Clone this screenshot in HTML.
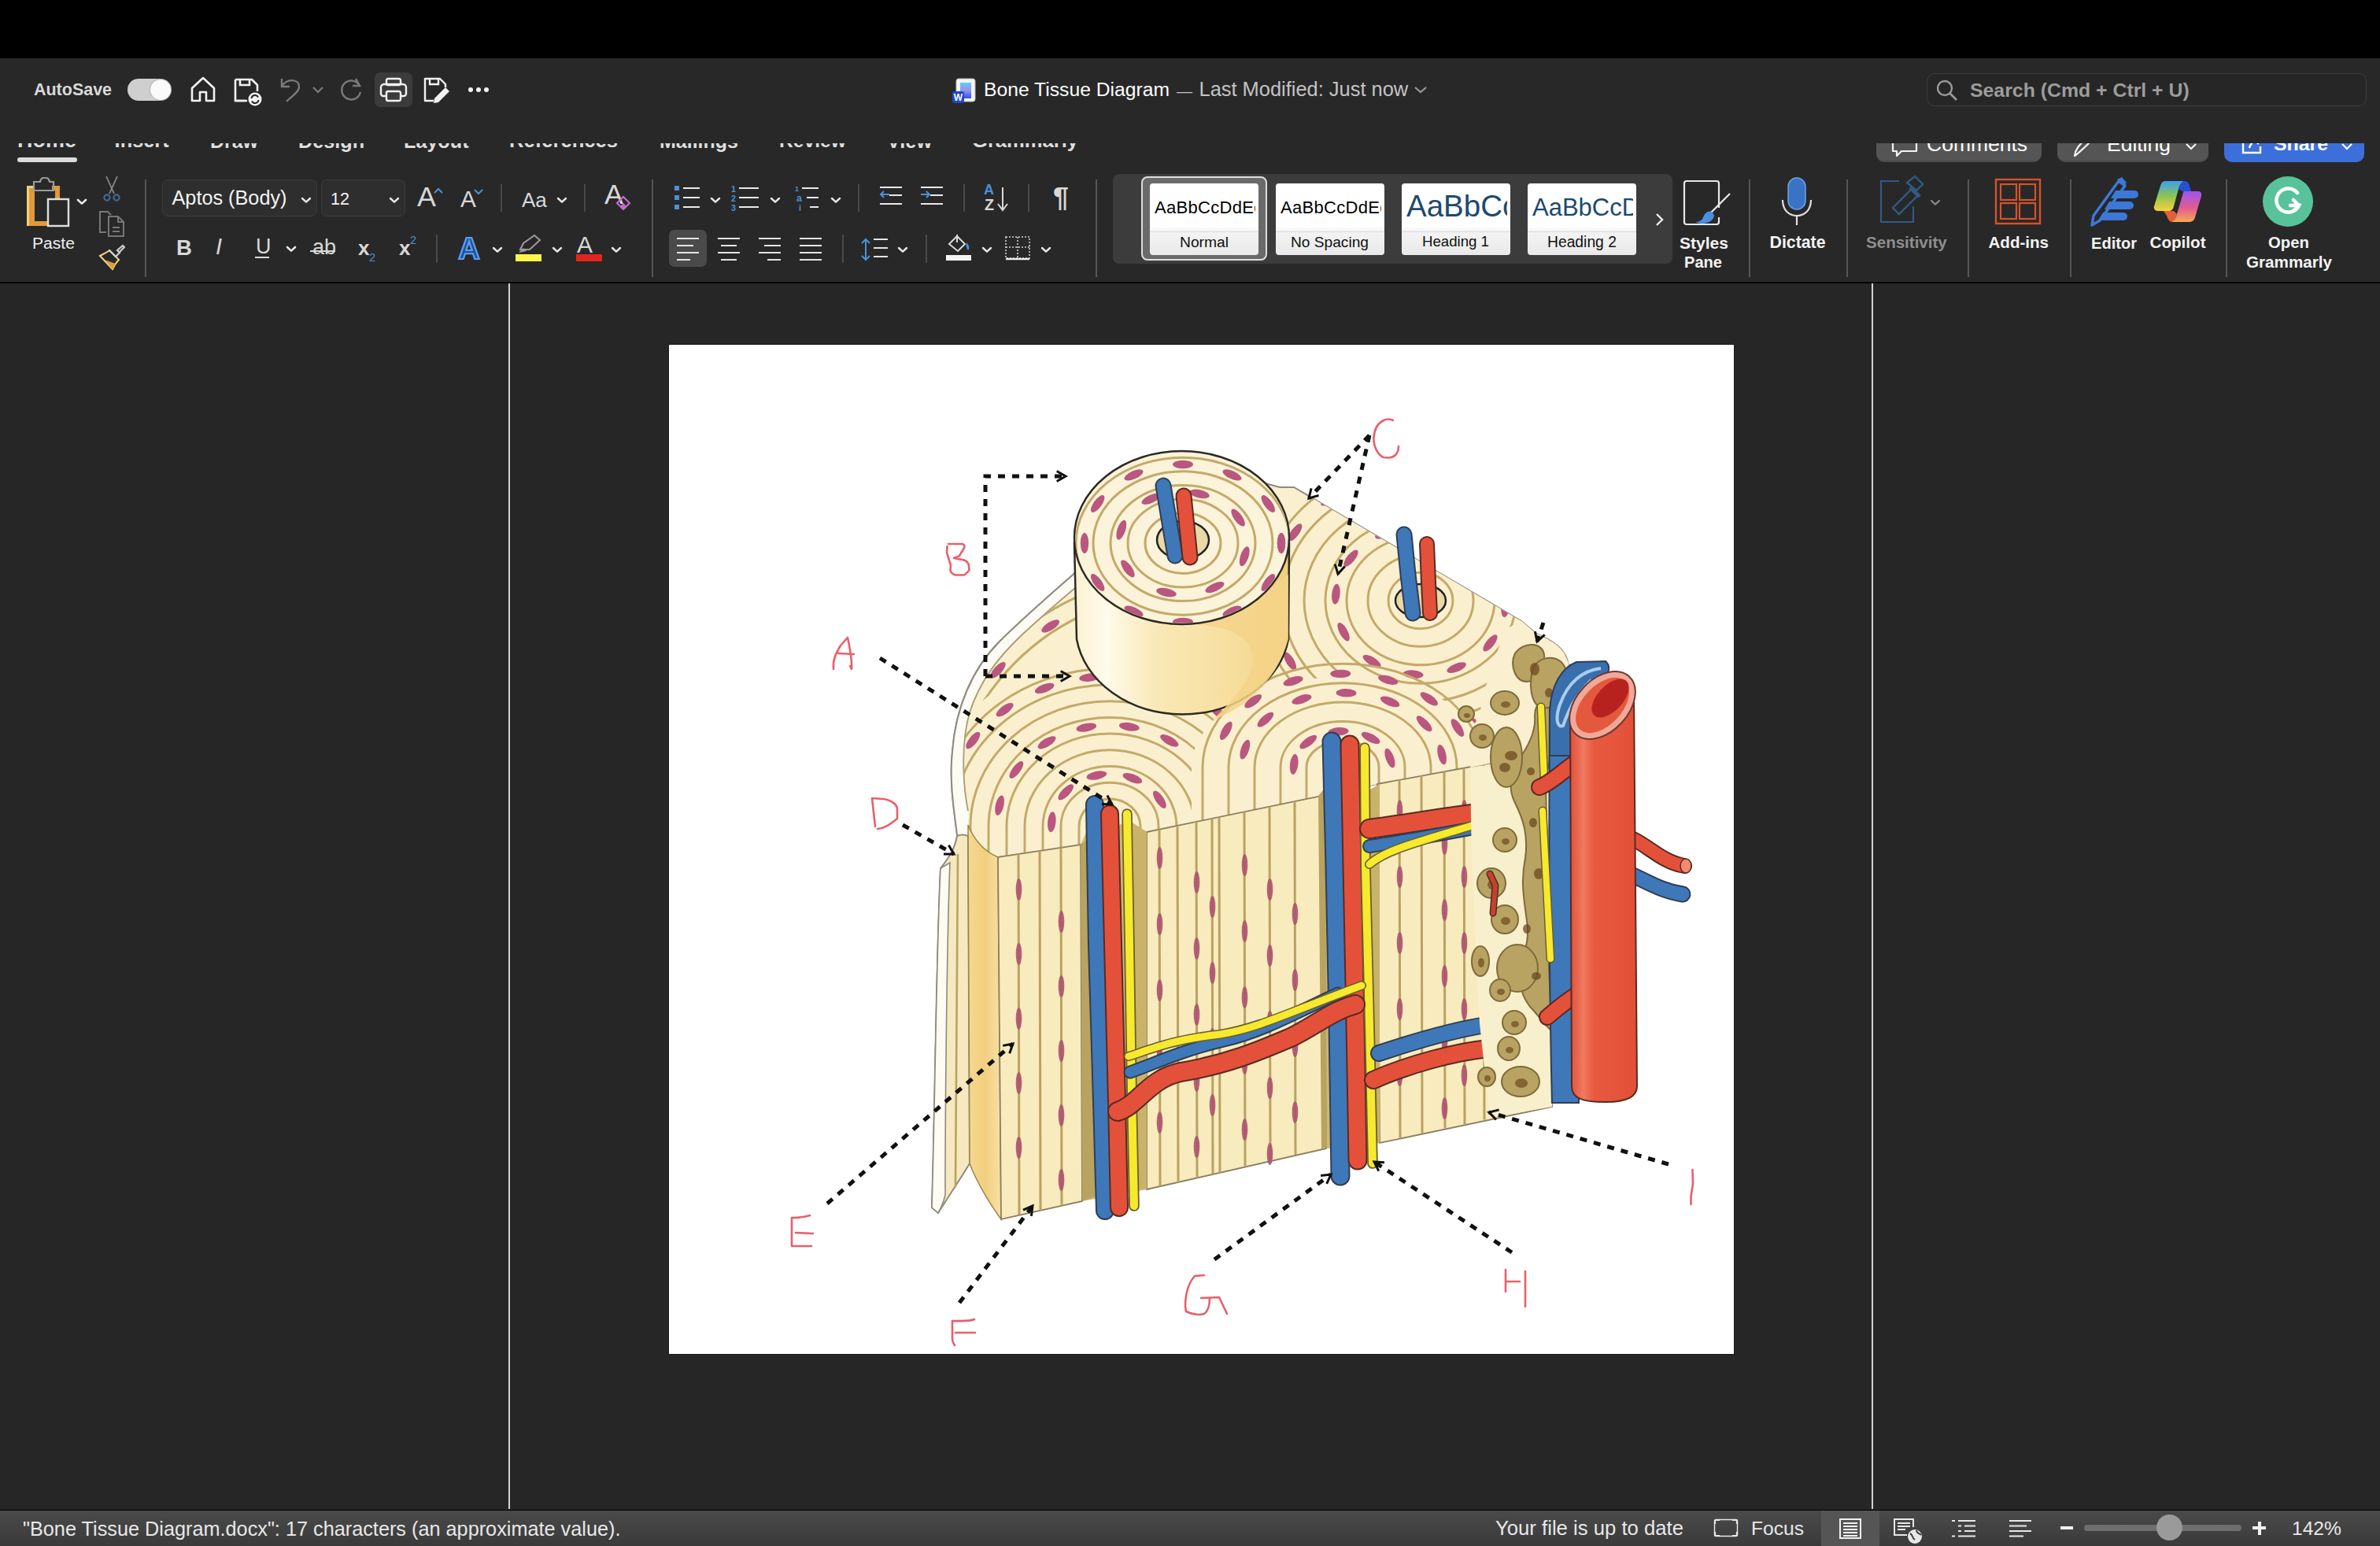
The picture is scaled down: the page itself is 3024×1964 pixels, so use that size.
<!DOCTYPE html>
<html><head><meta charset="utf-8"><title>Bone Tissue Diagram</title>
<style>*{margin:0;padding:0;box-sizing:border-box}
html,body{width:3024px;height:1964px;overflow:hidden;background:#262626;font-family:"Liberation Sans",sans-serif;color:#e6e6e6}
.abs{position:absolute}
.t{position:absolute;white-space:nowrap}
</style></head><body>
<div class="abs" style="left:0;top:0;width:3024px;height:74px;background:#000"></div>
<div class="abs" style="left:0;top:74px;width:3024px;height:283px;background:#282828"></div>
<div class="abs" style="left:0;top:357px;width:3024px;height:1px;background:#2f2f2f"></div>
<div class="abs" style="left:0;top:358px;width:3024px;height:2px;background:#000"></div>
<div class="abs" style="left:646px;top:360px;width:2px;height:1557px;background:#d4d4d4"></div>
<div class="abs" style="left:2378px;top:360px;width:2px;height:1557px;background:#d4d4d4"></div>
<div class="t" style="left:43.0px;top:103.7px;font-size:21.48px;line-height:21.48px;font-weight:700;color:#d9d9d9;">AutoSave</div>
<div class="abs" style="left:162px;top:100px;width:56px;height:28px;border-radius:14px;background:#cfcfcf"></div>
<div class="abs" style="left:191px;top:101px;width:26px;height:26px;border-radius:13px;background:#fafafa;box-shadow:0 0 2px rgba(0,0,0,.4)"></div>
<svg class="abs" style="left:240px;top:95px" width="36" height="36" viewBox="0 0 36 36"><path d="M4 17 L18 4 L32 17 V33 H22 V22 H14 V33 H4 Z" fill="none" stroke="#f2f2f2" stroke-width="2.6" stroke-linejoin="round"/></svg>
<svg class="abs" style="left:296px;top:98px" width="38" height="38" viewBox="0 0 38 38"><path d="M3 3 H24 L31 10 V18 M17 30 H3 Z" fill="none" stroke="#f2f2f2" stroke-width="2.6" stroke-linejoin="round"/><path d="M3 3 V30 H16" fill="none" stroke="#f2f2f2" stroke-width="2.6"/><path d="M9 3 V10 H21 V3" fill="none" stroke="#f2f2f2" stroke-width="2.6"/><circle cx="28" cy="28" r="8.5" fill="#f2f2f2"/><path d="M23.5 27 a4.5 4.5 0 0 1 8.5 -1.5 M32.5 29 a4.5 4.5 0 0 1 -8.5 1.5" fill="none" stroke="#282828" stroke-width="2"/></svg>
<svg class="abs" style="left:352px;top:96px" width="32" height="36" viewBox="0 0 32 36"><path d="M6 4 V14 H16" fill="none" stroke="#7a7a7a" stroke-width="2.4"/><path d="M6 14 C12 3 28 4 28 14 C28 22 16 28 12 33" fill="none" stroke="#7a7a7a" stroke-width="2.4"/></svg>
<svg class="abs" style="left:396px;top:108px" width="16" height="12" viewBox="0 0 16 12"><path d="M2 3 L8 9 L14 3" fill="none" stroke="#7a7a7a" stroke-width="2.2"/></svg>
<svg class="abs" style="left:430px;top:97px" width="33" height="33" viewBox="0 0 33 33"><path d="M27 12 A12 12 0 1 0 28 20" fill="none" stroke="#7a7a7a" stroke-width="2.4"/><path d="M22 3 L27 12 L18 12" fill="none" stroke="#7a7a7a" stroke-width="2.4"/></svg>
<div class="abs" style="left:476px;top:92px;width:48px;height:44px;border-radius:7px;background:#3b3b3b"></div>
<svg class="abs" style="left:482px;top:98px" width="36" height="33" viewBox="0 0 36 33"><rect x="9" y="2" width="18" height="8" rx="2" fill="none" stroke="#f2f2f2" stroke-width="2.4"/><path d="M8 24 H5 a3 3 0 0 1 -3 -3 V13 a4 4 0 0 1 4 -4 H30 a4 4 0 0 1 4 4 V21 a3 3 0 0 1 -3 3 H28" fill="none" stroke="#f2f2f2" stroke-width="2.4"/><rect x="9" y="18" width="18" height="12" rx="2" fill="none" stroke="#f2f2f2" stroke-width="2.4"/></svg>
<svg class="abs" style="left:537px;top:97px" width="36" height="36" viewBox="0 0 36 36"><path d="M14 31 H3 V3 H22 L29 10 V14" fill="none" stroke="#f2f2f2" stroke-width="2.4" stroke-linejoin="round"/><path d="M9 3 V10 H20 V3" fill="none" stroke="#f2f2f2" stroke-width="2.4"/><path d="M29 14 L34 19 L20 33 L14 34 L15 28 Z" fill="#f2f2f2"/></svg>
<div class="abs" style="left:595px;top:111px;width:6px;height:6px;border-radius:3px;background:#f2f2f2"></div>
<div class="abs" style="left:605px;top:111px;width:6px;height:6px;border-radius:3px;background:#f2f2f2"></div>
<div class="abs" style="left:615px;top:111px;width:6px;height:6px;border-radius:3px;background:#f2f2f2"></div>
<svg class="abs" style="left:1210px;top:99px" width="32" height="33" viewBox="0 0 32 33"><defs><linearGradient id="wg" x1="0" y1="0" x2="0" y2="1"><stop offset="0" stop-color="#5fd0f5"/><stop offset=".5" stop-color="#9a8ff0"/><stop offset="1" stop-color="#2a55e0"/></linearGradient></defs><rect x="5" y="1" width="24" height="29" rx="3" fill="#f4f4f4" stroke="#bbb"/><rect x="10" y="6" width="14" height="20" fill="url(#wg)"/><rect x="0" y="17" width="15" height="15" rx="3" fill="#2046c8"/><text x="7.5" y="29" font-family="Liberation Sans" font-weight="700" font-size="12" fill="#fff" text-anchor="middle">W</text></svg>
<div class="t" style="left:1250.0px;top:102.0px;font-size:24.69px;line-height:24.69px;font-weight:400;color:#ffffff;">Bone Tissue Diagram</div>
<div class="t" style="left:1495.0px;top:106.0px;font-size:20.00px;line-height:20.00px;font-weight:400;color:#c4c4c4;">—</div>
<div class="t" style="left:1523.5px;top:101.4px;font-size:25.43px;line-height:25.43px;font-weight:400;color:#c4c4c4;">Last Modified: Just now</div>
<svg class="abs" style="left:1796px;top:108px" width="18" height="12" viewBox="0 0 18 12"><path d="M2 3 L9 9 L16 3" fill="none" stroke="#9a9a9a" stroke-width="2.2"/></svg>
<div class="abs" style="left:2448px;top:93px;width:559px;height:42px;border-radius:10px;border:1.5px solid #3d3d3d;background:#262626"></div>
<svg class="abs" style="left:2459px;top:100px" width="30" height="30" viewBox="0 0 30 30"><circle cx="12" cy="12" r="9" fill="none" stroke="#9a9a9a" stroke-width="2.4"/><path d="M18.5 18.5 L27 27" stroke="#9a9a9a" stroke-width="2.6"/></svg>
<div class="t" style="left:2503.0px;top:102.9px;font-size:24.84px;line-height:24.84px;font-weight:700;color:#9c9c9c;">Search (Cmd + Ctrl + U)</div>
<div class="abs" style="left:0;top:182px;width:3024px;height:30px;overflow:hidden">
<div class="t" style="left:22.0px;top:-16.9px;font-size:26.98px;line-height:26.98px;font-weight:700;color:#dedede;">Home</div>
<div class="t" style="left:145.6px;top:-15.6px;font-size:25.37px;line-height:25.37px;font-weight:700;color:#dedede;">Insert</div>
<div class="t" style="left:267.0px;top:-15.2px;font-size:24.90px;line-height:24.90px;font-weight:700;color:#dedede;">Draw</div>
<div class="t" style="left:379.0px;top:-15.4px;font-size:25.23px;line-height:25.23px;font-weight:700;color:#dedede;">Design</div>
<div class="t" style="left:513.0px;top:-15.4px;font-size:25.18px;line-height:25.18px;font-weight:700;color:#dedede;">Layout</div>
<div class="t" style="left:647.0px;top:-15.8px;font-size:25.60px;line-height:25.60px;font-weight:700;color:#dedede;">References</div>
<div class="t" style="left:838.0px;top:-15.2px;font-size:25.00px;line-height:25.00px;font-weight:700;color:#dedede;">Mailings</div>
<div class="t" style="left:990.0px;top:-14.9px;font-size:24.64px;line-height:24.64px;font-weight:700;color:#dedede;">Review</div>
<div class="t" style="left:1127.0px;top:-15.4px;font-size:25.22px;line-height:25.22px;font-weight:700;color:#dedede;">View</div>
<div class="t" style="left:1235.0px;top:-15.7px;font-size:25.57px;line-height:25.57px;font-weight:700;color:#dedede;">Grammarly</div>
<div class="abs" style="left:2384px;top:-20px;width:210px;height:44px;border-radius:10px;background:#555;border-bottom:2px solid #4b4b4b"></div>
<svg class="abs" style="left:2402px;top:-14px" width="36" height="34" viewBox="0 0 36 34"><path d="M3 4 H33 V24 H14 L8 30 V24 H3 Z" fill="none" stroke="#f4f4f4" stroke-width="2.2" stroke-linejoin="round"/></svg>
<div class="t" style="left:2448.0px;top:-12.5px;font-size:26.50px;line-height:26.50px;font-weight:400;color:#ffffff;">Comments</div>
<div class="abs" style="left:2614px;top:-20px;width:192px;height:44px;border-radius:10px;background:#555;border-bottom:2px solid #4b4b4b"></div>
<svg class="abs" style="left:2632px;top:-14px" width="30" height="34" viewBox="0 0 30 34"><path d="M4 30 C5 22 8 18 22 4 L27 9 C13 23 10 26 4 30 Z" fill="none" stroke="#f4f4f4" stroke-width="2.2" stroke-linejoin="round"/></svg>
<div class="t" style="left:2677.0px;top:-12.5px;font-size:26.47px;line-height:26.47px;font-weight:400;color:#ffffff;">Editing</div>
<svg class="abs" style="left:2776px;top:-1px" width="16" height="12" viewBox="0 0 16 12"><path d="M2 2 L8 8 L14 2" fill="none" stroke="#f4f4f4" stroke-width="2.2"/></svg>
<div class="abs" style="left:2826px;top:-20px;width:178px;height:44px;border-radius:10px;background:#3d6fdb"></div>
<svg class="abs" style="left:2846px;top:-14px" width="32" height="30" viewBox="0 0 32 30"><path d="M14 4 H4 V26 H26 V18" fill="none" stroke="#fff" stroke-width="2.4"/><path d="M12 20 C14 12 20 9 28 9 M22 3 L28 9 L22 15" fill="none" stroke="#fff" stroke-width="2.4"/></svg>
<div class="t" style="left:2889.0px;top:-11.1px;font-size:24.82px;line-height:24.82px;font-weight:700;color:#ffffff;">Share</div>
<svg class="abs" style="left:2974px;top:-1px" width="16" height="12" viewBox="0 0 16 12"><path d="M2 2 L8 8 L14 2" fill="none" stroke="#fff" stroke-width="2.2"/></svg>
</div>
<div class="abs" style="left:22px;top:200px;width:76px;height:6px;border-radius:3px;background:#dcdcdc"></div>
<svg class="abs" style="left:30px;top:225px" width="62" height="66" viewBox="0 0 62 66"><path d="M7 14 H14 V56 H32 V62 H4 V14 Z" fill="#e09a3a"/><path d="M4 11 H14 V14 H7 V62 H4 Z" fill="#f3cf7e"/><path d="M36 11 H46 V28 H40 V17 H36 Z" fill="#e09a3a"/><path d="M13 6 H21 C22 -1 32 -1 33 6 H38 V17 H13 Z" fill="none" stroke="#9a9a9a" stroke-width="2.2"/><rect x="31" y="28" width="26" height="34" fill="none" stroke="#e0e0e0" stroke-width="2.4"/></svg>
<svg class="abs" style="left:96px;top:251px" width="16" height="11" viewBox="-2 -2 16 11"><path d="M1 1 L6.0 5.6 L11 1" fill="none" stroke="#e9e9e9" stroke-width="2.6" stroke-linecap="round" stroke-linejoin="round"/></svg>
<div class="t" style="left:41.0px;top:298.1px;font-size:21.09px;line-height:21.09px;font-weight:400;color:#f0f0f0;">Paste</div>
<svg class="abs" style="left:130px;top:222px" width="24" height="36" viewBox="0 0 24 36"><path d="M5 2 L15 24 M19 2 L9 24" stroke="#8a8a8a" stroke-width="1.8" fill="none"/><circle cx="6" cy="29" r="3.6" fill="none" stroke="#3f6a94" stroke-width="2.2"/><circle cx="18" cy="29" r="3.6" fill="none" stroke="#3f6a94" stroke-width="2.2"/></svg>
<svg class="abs" style="left:125px;top:267px" width="34" height="35" viewBox="0 0 34 35"><path d="M10 28 H2 V2 H12 L16 6" fill="none" stroke="#777" stroke-width="2"/><path d="M13 8 H25 L32 15 V33 H13 Z M25 8 V15 H32" fill="none" stroke="#777" stroke-width="2"/><path d="M18 22 H27 M18 27 H27" stroke="#777" stroke-width="2"/></svg>
<svg class="abs" style="left:125px;top:310px" width="34" height="34" viewBox="0 0 34 34"><path d="M2 15 C8 12 12 10 14 8 L26 20 C22 24 20 28 18 32 Z" fill="none" stroke="#f0d58f" stroke-width="2"/><path d="M8 20 L22 25 L18 32 Z" fill="#e09a3a"/><path d="M14 8 L22 16 L27 11 L24 8 L31 2 L33 4 L27 10" fill="none" stroke="#d0d0d0" stroke-width="2.2"/></svg>
<div class="abs" style="left:184.0px;top:228px;width:2px;height:124px;background:#555"></div>
<div class="abs" style="left:206px;top:228px;width:197px;height:47px;border-radius:7px;background:#2e2e2e;border:1px solid #3c3c3c"></div>
<div class="t" style="left:218.5px;top:239.0px;font-size:25.26px;line-height:25.26px;font-weight:400;color:#f4f4f4;">Aptos (Body)</div>
<svg class="abs" style="left:381px;top:249px" width="16" height="11" viewBox="-2 -2 16 11"><path d="M1 1 L6.0 5.6 L11 1" fill="none" stroke="#e9e9e9" stroke-width="2.4" stroke-linecap="round" stroke-linejoin="round"/></svg>
<div class="abs" style="left:408px;top:228px;width:107px;height:47px;border-radius:7px;background:#2e2e2e;border:1px solid #3c3c3c"></div>
<div class="t" style="left:420.0px;top:242.1px;font-size:21.62px;line-height:21.62px;font-weight:400;color:#f4f4f4;">12</div>
<svg class="abs" style="left:493px;top:249px" width="16" height="11" viewBox="-2 -2 16 11"><path d="M1 1 L6.0 5.6 L11 1" fill="none" stroke="#e9e9e9" stroke-width="2.4" stroke-linecap="round" stroke-linejoin="round"/></svg>
<div class="t" style="left:530.0px;top:232.6px;font-size:35.82px;line-height:35.82px;font-weight:400;color:#d8d8d8;">A</div>
<svg class="abs" style="left:551px;top:238px" width="12" height="8" viewBox="0 0 12 8"><path d="M1 7 L6 2 L11 7" fill="none" stroke="#4a90d9" stroke-width="2"/></svg>
<div class="t" style="left:585.0px;top:237.6px;font-size:29.85px;line-height:29.85px;font-weight:400;color:#d8d8d8;">A</div>
<svg class="abs" style="left:602px;top:240px" width="12" height="8" viewBox="0 0 12 8"><path d="M1 1 L6 6 L11 1" fill="none" stroke="#4a90d9" stroke-width="2"/></svg>
<div class="abs" style="left:636.0px;top:234px;width:2px;height:35px;background:#4a4a4a"></div>
<div class="t" style="left:663.0px;top:240.9px;font-size:26.02px;line-height:26.02px;font-weight:400;color:#d8d8d8;">Aa</div>
<svg class="abs" style="left:706px;top:249px" width="16" height="11" viewBox="-2 -2 16 11"><path d="M1 1 L6.0 5.6 L11 1" fill="none" stroke="#e9e9e9" stroke-width="2.4" stroke-linecap="round" stroke-linejoin="round"/></svg>
<div class="abs" style="left:742.0px;top:234px;width:2px;height:35px;background:#4a4a4a"></div>
<div class="t" style="left:768.0px;top:229.6px;font-size:35.82px;line-height:35.82px;font-weight:400;color:#d8d8d8;">A</div>
<svg class="abs" style="left:781px;top:245px" width="22" height="22" viewBox="0 0 22 22"><path d="M3 13 L11 5 L19 13 L11 21 Z" fill="none" stroke="#c06ad0" stroke-width="2.2"/><path d="M7 17 L11 13 L15 17 L11 21 Z" fill="#c06ad0"/></svg>
<div class="abs" style="left:828.0px;top:228px;width:2px;height:124px;background:#555"></div>
<div class="abs" style="left:857px;top:236px;width:6px;height:6px;background:#4a90d9"></div>
<div class="abs" style="left:857px;top:248px;width:6px;height:6px;background:#4a90d9"></div>
<div class="abs" style="left:857px;top:260px;width:6px;height:6px;background:#4a90d9"></div>
<div class="abs" style="left:868px;top:238.0px;width:21px;height:2px;background:#e9e9e9"></div><div class="abs" style="left:868px;top:250.0px;width:21px;height:2px;background:#e9e9e9"></div><div class="abs" style="left:868px;top:262.0px;width:21px;height:2px;background:#e9e9e9"></div>
<svg class="abs" style="left:901px;top:249px" width="16" height="11" viewBox="-2 -2 16 11"><path d="M1 1 L6.0 5.6 L11 1" fill="none" stroke="#e9e9e9" stroke-width="2.4" stroke-linecap="round" stroke-linejoin="round"/></svg>
<div class="t" style="left:929.0px;top:234.9px;font-size:10.71px;line-height:10.71px;font-weight:700;color:#4a90d9;">1</div>
<div class="t" style="left:929.0px;top:246.9px;font-size:10.71px;line-height:10.71px;font-weight:700;color:#4a90d9;">2</div>
<div class="t" style="left:929.0px;top:258.9px;font-size:10.71px;line-height:10.71px;font-weight:700;color:#4a90d9;">3</div>
<div class="abs" style="left:939px;top:238.0px;width:25px;height:2px;background:#e9e9e9"></div><div class="abs" style="left:939px;top:250.0px;width:25px;height:2px;background:#e9e9e9"></div><div class="abs" style="left:939px;top:262.0px;width:25px;height:2px;background:#e9e9e9"></div>
<svg class="abs" style="left:977px;top:249px" width="16" height="11" viewBox="-2 -2 16 11"><path d="M1 1 L6.0 5.6 L11 1" fill="none" stroke="#e9e9e9" stroke-width="2.4" stroke-linecap="round" stroke-linejoin="round"/></svg>
<div class="t" style="left:1010.0px;top:236.4px;font-size:8.93px;line-height:8.93px;font-weight:700;color:#4a90d9;">1</div>
<div class="t" style="left:1012.0px;top:245.6px;font-size:12.28px;line-height:12.28px;font-weight:700;color:#4a90d9;">a</div>
<div class="t" style="left:1015.0px;top:258.9px;font-size:10.71px;line-height:10.71px;font-weight:700;color:#4a90d9;">i</div>
<div class="abs" style="left:1019px;top:238.0px;width:21px;height:2px;background:#e9e9e9"></div>
<div class="abs" style="left:1025px;top:250.0px;width:15px;height:2px;background:#e9e9e9"></div>
<div class="abs" style="left:1029px;top:262.0px;width:11px;height:2px;background:#e9e9e9"></div>
<svg class="abs" style="left:1054px;top:249px" width="16" height="11" viewBox="-2 -2 16 11"><path d="M1 1 L6.0 5.6 L11 1" fill="none" stroke="#e9e9e9" stroke-width="2.4" stroke-linecap="round" stroke-linejoin="round"/></svg>
<div class="abs" style="left:1090.0px;top:234px;width:2px;height:35px;background:#4a4a4a"></div>
<div class="abs" style="left:1118px;top:237.0px;width:28px;height:2px;background:#e9e9e9"></div>
<div class="abs" style="left:1130px;top:247.0px;width:16px;height:2px;background:#e9e9e9"></div>
<div class="abs" style="left:1118px;top:258.0px;width:28px;height:2px;background:#e9e9e9"></div>
<svg class="abs" style="left:1117px;top:241px" width="14" height="12" viewBox="0 0 14 12"><path d="M13 6 H2 M6 2 L2 6 L6 10" fill="none" stroke="#4a90d9" stroke-width="2"/></svg>
<div class="abs" style="left:1170px;top:237.0px;width:28px;height:2px;background:#e9e9e9"></div>
<div class="abs" style="left:1182px;top:247.0px;width:16px;height:2px;background:#e9e9e9"></div>
<div class="abs" style="left:1170px;top:258.0px;width:28px;height:2px;background:#e9e9e9"></div>
<svg class="abs" style="left:1169px;top:241px" width="14" height="12" viewBox="0 0 14 12"><path d="M1 6 H12 M8 2 L12 6 L8 10" fill="none" stroke="#4a90d9" stroke-width="2"/></svg>
<div class="abs" style="left:1224.0px;top:234px;width:2px;height:35px;background:#4a4a4a"></div>
<div class="t" style="left:1250.0px;top:231.7px;font-size:18.06px;line-height:18.06px;font-weight:700;color:#4a90d9;">A</div>
<div class="t" style="left:1251.0px;top:251.3px;font-size:19.67px;line-height:19.67px;font-weight:700;color:#d8d8d8;">Z</div>
<svg class="abs" style="left:1266px;top:236px" width="18" height="34" viewBox="0 0 18 34"><path d="M8 2 V30 M2 23 L8 31 L14 23" fill="none" stroke="#d8d8d8" stroke-width="2"/></svg>
<div class="abs" style="left:1306.0px;top:234px;width:2px;height:35px;background:#4a4a4a"></div>
<div class="t" style="left:1338.0px;top:232.6px;font-size:35.71px;line-height:35.71px;font-weight:700;color:#d8d8d8;">¶</div>
<div class="abs" style="left:1392.0px;top:228px;width:2px;height:124px;background:#555"></div>
<div class="t" style="left:224.0px;top:300.6px;font-size:27.50px;line-height:27.50px;font-weight:700;color:#d8d8d8;">B</div>
<div class="t" style="left:274.0px;top:299.4px;font-size:29.00px;line-height:29.00px;font-weight:400;color:#d8d8d8;font-style:italic;font-family:"Liberation Serif",serif">I</div>
<div class="t" style="left:325.0px;top:300.1px;font-size:27.00px;line-height:27.00px;font-weight:400;color:#d8d8d8;">U</div>
<div class="abs" style="left:324px;top:326px;width:18px;height:2px;background:#d8d8d8"></div>
<svg class="abs" style="left:362px;top:311px" width="16" height="11" viewBox="-2 -2 16 11"><path d="M1 1 L6.0 5.6 L11 1" fill="none" stroke="#e9e9e9" stroke-width="2.6" stroke-linecap="round" stroke-linejoin="round"/></svg>
<div class="t" style="left:397.0px;top:301.1px;font-size:27.00px;line-height:27.00px;font-weight:400;color:#d8d8d8;">ab</div>
<div class="abs" style="left:394px;top:317.5px;width:32px;height:2px;background:#d8d8d8"></div>
<div class="t" style="left:455.0px;top:301.9px;font-size:26.00px;line-height:26.00px;font-weight:700;color:#d8d8d8;">x</div>
<div class="t" style="left:469.0px;top:319.7px;font-size:14.50px;line-height:14.50px;font-weight:400;color:#4a90d9;">2</div>
<div class="t" style="left:507.0px;top:301.9px;font-size:26.00px;line-height:26.00px;font-weight:700;color:#d8d8d8;">x</div>
<div class="t" style="left:521.0px;top:297.7px;font-size:14.50px;line-height:14.50px;font-weight:400;color:#4a90d9;">2</div>
<div class="abs" style="left:554.0px;top:298px;width:2px;height:36px;background:#4a4a4a"></div>
<svg class="abs" style="left:578px;top:298px" width="36" height="34" viewBox="0 0 36 34"><text x="18" y="31" text-anchor="middle" font-family="Liberation Sans" font-weight="700" font-size="38" fill="#1f4e9a" stroke="#5aa0f0" stroke-width="2.2">A</text></svg>
<svg class="abs" style="left:624px;top:312px" width="16" height="11" viewBox="-2 -2 16 11"><path d="M1 1 L6.0 5.6 L11 1" fill="none" stroke="#e9e9e9" stroke-width="2.4" stroke-linecap="round" stroke-linejoin="round"/></svg>
<svg class="abs" style="left:655px;top:297px" width="34" height="26" viewBox="0 0 34 26"><path d="M6 20 L10 12 L24 2 L31 8 L18 20 Z" fill="none" stroke="#9a9a9a" stroke-width="2"/><path d="M4 24 L10 18 L14 22 Z" fill="#9a9a9a"/></svg>
<div class="abs" style="left:655px;top:323px;width:33px;height:9px;background:#fff64a"></div>
<svg class="abs" style="left:700px;top:312px" width="16" height="11" viewBox="-2 -2 16 11"><path d="M1 1 L6.0 5.6 L11 1" fill="none" stroke="#e9e9e9" stroke-width="2.4" stroke-linecap="round" stroke-linejoin="round"/></svg>
<div class="t" style="left:733.0px;top:295.5px;font-size:30.00px;line-height:30.00px;font-weight:400;color:#d8d8d8;">A</div>
<div class="abs" style="left:732px;top:323px;width:33px;height:9px;background:#e0261c"></div>
<svg class="abs" style="left:775px;top:312px" width="16" height="11" viewBox="-2 -2 16 11"><path d="M1 1 L6.0 5.6 L11 1" fill="none" stroke="#e9e9e9" stroke-width="2.4" stroke-linecap="round" stroke-linejoin="round"/></svg>
<div class="abs" style="left:828.0px;top:228px;width:2px;height:124px;background:#555"></div>
<div class="abs" style="left:850px;top:292px;width:48px;height:47px;border-radius:7px;background:#4a4a4a"></div>
<div class="abs" style="left:860px;top:302px;width:28px;height:2px;background:#e4e4e4"></div><div class="abs" style="left:860px;top:311px;width:21px;height:2px;background:#e4e4e4"></div><div class="abs" style="left:860px;top:320px;width:28px;height:2px;background:#e4e4e4"></div><div class="abs" style="left:860px;top:329px;width:17px;height:2px;background:#e4e4e4"></div>
<div class="abs" style="left:912px;top:302px;width:28px;height:2px;background:#e4e4e4"></div><div class="abs" style="left:916px;top:311px;width:20px;height:2px;background:#e4e4e4"></div><div class="abs" style="left:912px;top:320px;width:28px;height:2px;background:#e4e4e4"></div><div class="abs" style="left:916px;top:329px;width:20px;height:2px;background:#e4e4e4"></div>
<div class="abs" style="left:964px;top:302px;width:28px;height:2px;background:#e4e4e4"></div><div class="abs" style="left:971px;top:311px;width:21px;height:2px;background:#e4e4e4"></div><div class="abs" style="left:964px;top:320px;width:28px;height:2px;background:#e4e4e4"></div><div class="abs" style="left:975px;top:329px;width:17px;height:2px;background:#e4e4e4"></div>
<div class="abs" style="left:1016px;top:302px;width:28px;height:2px;background:#e4e4e4"></div><div class="abs" style="left:1016px;top:311px;width:28px;height:2px;background:#e4e4e4"></div><div class="abs" style="left:1016px;top:320px;width:28px;height:2px;background:#e4e4e4"></div><div class="abs" style="left:1016px;top:329px;width:28px;height:2px;background:#e4e4e4"></div>
<div class="abs" style="left:1070.0px;top:298px;width:2px;height:36px;background:#4a4a4a"></div>
<svg class="abs" style="left:1094px;top:302px" width="12" height="30" viewBox="0 0 12 30"><path d="M6 2 V28 M1 7 L6 2 L11 7 M1 23 L6 28 L11 23" fill="none" stroke="#4a90d9" stroke-width="2"/></svg>
<div class="abs" style="left:1110px;top:303px;width:18px;height:2px;background:#e4e4e4"></div><div class="abs" style="left:1110px;top:314px;width:18px;height:2px;background:#e4e4e4"></div><div class="abs" style="left:1110px;top:325px;width:18px;height:2px;background:#e4e4e4"></div>
<svg class="abs" style="left:1139px;top:312px" width="16" height="11" viewBox="-2 -2 16 11"><path d="M1 1 L6.0 5.6 L11 1" fill="none" stroke="#e9e9e9" stroke-width="2.4" stroke-linecap="round" stroke-linejoin="round"/></svg>
<div class="abs" style="left:1176.0px;top:298px;width:2px;height:36px;background:#4a4a4a"></div>
<svg class="abs" style="left:1202px;top:296px" width="34" height="26" viewBox="0 0 34 26"><path d="M4 14 L14 4 L24 14 L15 23 Z" fill="none" stroke="#d8d8d8" stroke-width="2"/><path d="M14 2 V12" stroke="#d8d8d8" stroke-width="2"/><path d="M26 12 C30 16 30 20 28 22 C26 20 25 16 26 12Z" fill="#4a90d9"/></svg>
<div class="abs" style="left:1202px;top:324px;width:32px;height:7px;background:#f4f4f4"></div>
<svg class="abs" style="left:1246px;top:312px" width="16" height="11" viewBox="-2 -2 16 11"><path d="M1 1 L6.0 5.6 L11 1" fill="none" stroke="#e9e9e9" stroke-width="2.4" stroke-linecap="round" stroke-linejoin="round"/></svg>
<svg class="abs" style="left:1276px;top:299px" width="34" height="34" viewBox="0 0 34 34"><rect x="2" y="2" width="30" height="27" fill="none" stroke="#cfcfcf" stroke-width="1.6" stroke-dasharray="2 2"/><path d="M17 2 V29 M2 15 H32" stroke="#cfcfcf" stroke-width="1.6" stroke-dasharray="2 2"/><path d="M2 30 H32" stroke="#f0f0f0" stroke-width="2.4"/></svg>
<svg class="abs" style="left:1321px;top:312px" width="16" height="11" viewBox="-2 -2 16 11"><path d="M1 1 L6.0 5.6 L11 1" fill="none" stroke="#e9e9e9" stroke-width="2.4" stroke-linecap="round" stroke-linejoin="round"/></svg>
<div class="abs" style="left:1414px;top:221px;width:711px;height:114px;border-radius:8px;background:#3c3c3c"></div>
<div class="abs" style="left:1450px;top:224px;width:160px;height:107px;border-radius:8px;background:#6a6a6a;border:2px solid #dedede"></div>
<div class="abs" style="left:1461px;top:233px;width:138px;height:91px;border-radius:4px;overflow:hidden;background:linear-gradient(#fff 0,#fff 60%,#f4f4f4 66%,#e9e9e9 100%)">
<div class="abs" style="left:0;top:61px;width:138px;height:1px;background:#dadada"></div>
<div class="abs" style="left:0;top:0;width:134px;height:60px;overflow:hidden">
<div class="t" style="left:6.0px;top:19.7px;font-size:22.00px;line-height:22.00px;font-weight:400;color:#000;letter-spacing:0.3px">AaBbCcDdEe</div>
</div>
<div class="t" style="left:38.0px;top:64.6px;font-size:19.25px;line-height:19.25px;font-weight:400;color:#111;">Normal</div>
</div>
<div class="abs" style="left:1621px;top:233px;width:138px;height:91px;border-radius:4px;overflow:hidden;background:linear-gradient(#fff 0,#fff 60%,#f4f4f4 66%,#e9e9e9 100%)">
<div class="abs" style="left:0;top:61px;width:138px;height:1px;background:#dadada"></div>
<div class="abs" style="left:0;top:0;width:134px;height:60px;overflow:hidden">
<div class="t" style="left:6.0px;top:19.7px;font-size:22.00px;line-height:22.00px;font-weight:400;color:#000;letter-spacing:0.3px">AaBbCcDdEe</div>
</div>
<div class="t" style="left:19.0px;top:64.7px;font-size:19.15px;line-height:19.15px;font-weight:400;color:#111;">No Spacing</div>
</div>
<div class="abs" style="left:1781px;top:233px;width:138px;height:91px;border-radius:4px;overflow:hidden;background:linear-gradient(#fff 0,#fff 60%,#f4f4f4 66%,#e9e9e9 100%)">
<div class="abs" style="left:0;top:61px;width:138px;height:1px;background:#dadada"></div>
<div class="abs" style="left:0;top:0;width:134px;height:60px;overflow:hidden">
<div class="t" style="left:6.0px;top:10.3px;font-size:38.50px;line-height:38.50px;font-weight:400;color:#1d4a6e;letter-spacing:0px">AaBbCcDd</div>
</div>
<div class="t" style="left:26.0px;top:65.2px;font-size:18.64px;line-height:18.64px;font-weight:400;color:#111;">Heading 1</div>
</div>
<div class="abs" style="left:1941px;top:233px;width:138px;height:91px;border-radius:4px;overflow:hidden;background:linear-gradient(#fff 0,#fff 60%,#f4f4f4 66%,#e9e9e9 100%)">
<div class="abs" style="left:0;top:61px;width:138px;height:1px;background:#dadada"></div>
<div class="abs" style="left:0;top:0;width:134px;height:60px;overflow:hidden">
<div class="t" style="left:6.0px;top:14.7px;font-size:31.00px;line-height:31.00px;font-weight:400;color:#1d4a6e;letter-spacing:0px">AaBbCcDdEe</div>
</div>
<div class="t" style="left:25.0px;top:64.6px;font-size:19.30px;line-height:19.30px;font-weight:400;color:#111;">Heading 2</div>
</div>
<svg class="abs" style="left:2102px;top:270px" width="14" height="18" viewBox="0 0 14 18"><path d="M3 2 L10 9 L3 16" fill="none" stroke="#f0f0f0" stroke-width="2.4"/></svg>
<svg class="abs" style="left:2136px;top:226px" width="64" height="62" viewBox="0 0 64 62"><path d="M48 50 V56 a3 3 0 0 1 -3 3 H7 a3 3 0 0 1 -3 -3 V7 a3 3 0 0 1 3 -3 H45 a3 3 0 0 1 3 3 V38" fill="none" stroke="#e8e8e8" stroke-width="2.2"/><path d="M62 20 L34 48" stroke="#e8e8e8" stroke-width="2.2"/><path d="M40 44 C36 40 30 44 28 50 C27 54 22 56 18 56 C26 60 40 58 42 48 Z" fill="#4a8fe0"/></svg>
<div class="t" style="left:2134.0px;top:298.1px;font-size:21.02px;line-height:21.02px;font-weight:700;color:#f4f4f4;">Styles</div>
<div class="t" style="left:2140.0px;top:322.9px;font-size:20.08px;line-height:20.08px;font-weight:700;color:#f4f4f4;">Pane</div>
<div class="abs" style="left:2222.0px;top:228px;width:2px;height:124px;background:#555"></div>
<svg class="abs" style="left:2262px;top:224px" width="44" height="64" viewBox="0 0 44 64"><rect x="10" y="2" width="22" height="40" rx="11" fill="#3a72c4" stroke="#6fa3e6" stroke-width="1.5"/><path d="M3 30 C3 44 12 50 21 50 C30 50 39 44 39 30" fill="none" stroke="#e0e0e0" stroke-width="2.2"/><path d="M21 50 V62" stroke="#e0e0e0" stroke-width="2.2"/></svg>
<div class="t" style="left:2248.5px;top:297.5px;font-size:21.32px;line-height:21.32px;font-weight:700;color:#f4f4f4;">Dictate</div>
<div class="abs" style="left:2346.0px;top:228px;width:2px;height:124px;background:#555"></div>
<svg class="abs" style="left:2387px;top:222px" width="58" height="64" viewBox="0 0 58 64"><path d="M26 8 H3 V60 H44 V40" fill="none" stroke="#2f5a86" stroke-width="2.2"/><path d="M18 42 L42 18 L50 26 L26 50 Z" fill="none" stroke="#2f5a86" stroke-width="2.4"/><path d="M36 10 L46 2 L56 12 L48 20 Z" fill="none" stroke="#2f5a86" stroke-width="2.4"/><path d="M40 16 L52 28" stroke="#2f5a86" stroke-width="5"/></svg>
<svg class="abs" style="left:2451px;top:252px" width="16" height="11" viewBox="-2 -2 16 11"><path d="M1 1 L6.0 5.6 L11 1" fill="none" stroke="#8a8a8a" stroke-width="2.2" stroke-linecap="round" stroke-linejoin="round"/></svg>
<div class="t" style="left:2371.0px;top:298.1px;font-size:20.56px;line-height:20.56px;font-weight:700;color:#8e8e8e;">Sensitivity</div>
<div class="abs" style="left:2500.0px;top:228px;width:2px;height:124px;background:#555"></div>
<svg class="abs" style="left:2533px;top:225px" width="62" height="62" viewBox="0 0 62 62"><rect x="3" y="3" width="56" height="56" fill="none" stroke="#d4532a" stroke-width="2.4"/><rect x="9" y="9" width="20" height="20" fill="none" stroke="#d4532a" stroke-width="2.2"/><rect x="33" y="9" width="20" height="20" fill="none" stroke="#d4532a" stroke-width="2.2"/><rect x="9" y="33" width="20" height="20" fill="none" stroke="#d4532a" stroke-width="2.2"/><rect x="33" y="33" width="20" height="20" fill="none" stroke="#d4532a" stroke-width="2.2"/></svg>
<div class="t" style="left:2526.5px;top:298.1px;font-size:20.56px;line-height:20.56px;font-weight:700;color:#f4f4f4;">Add-ins</div>
<div class="abs" style="left:2630.0px;top:228px;width:2px;height:124px;background:#555"></div>
<svg class="abs" style="left:2654px;top:224px" width="64" height="66" viewBox="0 0 64 66"><path d="M4 62 L6 50 L38 6 L46 12 L14 56 Z" fill="none" stroke="#3b78d8" stroke-width="3.5" stroke-linejoin="round"/><path d="M36 4 L42 1 L48 8 L44 12Z" fill="#3b78d8"/><path d="M34 18 H58 a5 5 0 0 1 0 10 H28 Z M26 32 H52 a5 5 0 0 1 0 10 H20 Z M18 46 H44 a5 5 0 0 1 0 10 H12 Z" fill="#3b78d8"/></svg>
<div class="t" style="left:2657.0px;top:298.5px;font-size:20.07px;line-height:20.07px;font-weight:700;color:#f4f4f4;">Editor</div>
<svg class="abs" style="left:2735px;top:228px" width="64" height="58" viewBox="0 0 64 58"><defs><linearGradient id="cp1" x1="0" y1="0" x2="0" y2="1"><stop offset="0" stop-color="#3aa0f2"/><stop offset=".5" stop-color="#8cc452"/><stop offset="1" stop-color="#f7d23c"/></linearGradient><linearGradient id="cp2" x1="0" y1="0" x2="0" y2="1"><stop offset="0" stop-color="#9b55ee"/><stop offset=".55" stop-color="#e45c8e"/><stop offset="1" stop-color="#f6aa5a"/></linearGradient></defs><path d="M16 2 H40 C36 4 34 8 33 12 L27 34 C26 38 24 40 20 40 H6 C3 40 1 37 2 34 L10 8 C11 4 13 2 16 2 Z" fill="url(#cp1)"/><path d="M40 2 C44 2 46 4 47 8 L49 15 H38 L33 12 C34 8 36 4 40 2 Z" fill="#2a4fd0"/><path d="M40 15 H58 C61 15 63 18 62 21 L54 48 C53 52 50 54 46 54 H24 C28 52 30 48 31 44 L38 20 C39 17 39 15 40 15 Z" fill="url(#cp2)"/><path d="M14 40 H27 L31 44 C30 48 28 52 24 54 C21 53 19 50 18 46 Z" fill="#e0603a"/></svg>
<div class="t" style="left:2731.5px;top:298.1px;font-size:20.64px;line-height:20.64px;font-weight:700;color:#f4f4f4;">Copilot</div>
<div class="abs" style="left:2828.0px;top:228px;width:2px;height:124px;background:#555"></div>
<svg class="abs" style="left:2874px;top:223px" width="66" height="66" viewBox="0 0 66 66"><circle cx="33" cy="33" r="32" fill="#58c29b"/><path d="M45 22 A15 15 0 1 0 47 38 H36" fill="none" stroke="#fff" stroke-width="4.5" stroke-linecap="round"/><path d="M40 31 L47 38 L40 45" fill="none" stroke="#fff" stroke-width="4.5" stroke-linecap="round" stroke-linejoin="round"/></svg>
<div class="t" style="left:2882.0px;top:298.3px;font-size:20.31px;line-height:20.31px;font-weight:700;color:#f4f4f4;">Open</div>
<div class="t" style="left:2854.0px;top:322.5px;font-size:20.64px;line-height:20.64px;font-weight:700;color:#f4f4f4;">Grammarly</div>
<div class="abs" style="left:849px;top:437px;width:1355px;height:1284px;background:#1b1b1b"></div>
<div class="abs" style="left:850px;top:438px;width:1353px;height:1282px;background:#fff;overflow:hidden">
<svg width="1353" height="1282" viewBox="850 438 1353 1282" style="position:absolute;left:0;top:0">
<defs><linearGradient id="cyl" x1="0" y1="0" x2="1" y2="0"><stop offset="0" stop-color="#fbf1d2"/><stop offset=".15" stop-color="#fffaea"/><stop offset=".4" stop-color="#f9e8b4"/><stop offset=".8" stop-color="#f6dc9a"/><stop offset="1" stop-color="#f2cd7c"/></linearGradient><linearGradient id="ocl" x1="0" y1="0" x2="1" y2="0"><stop offset="0" stop-color="#f4d991"/><stop offset=".5" stop-color="#f2cf7e"/><stop offset="1" stop-color="#f7e0a6"/></linearGradient><linearGradient id="art" x1="0" y1="0" x2="1" y2="0"><stop offset="0" stop-color="#e0503a"/><stop offset=".2" stop-color="#f07a60"/><stop offset=".35" stop-color="#e85a40"/><stop offset="1" stop-color="#e24f37"/></linearGradient></defs>
<clipPath id="ctop"><path d="M1205 1091 C1212 1080 1218 1072 1216 1060 C1212 1030 1206 990 1210 955 C1214 900 1235 850 1270 815 C1300 785 1335 755 1368 726 L1420 640 L1500 600 L1600 612 L1626 619 L1644 619 L1933 789 L1952 805 C1975 815 1990 825 1993 845 L1993 960 L1896 969 L1750 996 L1679 1011 L1457 1057 L1373 1073 L1266 1088 Z"/></clipPath>
<path d="M1205 1091 C1212 1080 1218 1072 1216 1060 C1212 1030 1206 990 1210 955 C1214 900 1235 850 1270 815 C1300 785 1335 755 1368 726 L1420 640 L1500 600 L1600 612 L1626 619 L1644 619 L1933 789 L1952 805 C1975 815 1990 825 1993 845 L1993 960 L1896 969 L1750 996 L1679 1011 L1457 1057 L1373 1073 L1266 1088 Z" fill="#faf0d0" stroke="#8c8a80" stroke-width="2"/>
<path d="M1230 1030 C1222 990 1222 940 1232 905 C1245 865 1268 835 1300 805 C1325 782 1350 760 1372 742" fill="none" stroke="#a89c78" stroke-width="1.6"/>
<g clip-path="url(#ctop)">
<ellipse cx="1500" cy="1060" rx="300" ry="306" fill="none" stroke="#c3aa68" stroke-width="3"/>
<ellipse cx="1500" cy="1060" rx="324" ry="330" fill="none" stroke="#c3aa68" stroke-width="3"/>
<ellipse cx="1500" cy="1060" rx="348" ry="355" fill="none" stroke="#c3aa68" stroke-width="3"/>
<ellipse cx="1500" cy="1070" rx="278" ry="290" fill="#faf0d0"/>
<ellipse cx="1490" cy="1130" rx="210" ry="210.0" fill="none" stroke="#c3aa68" stroke-width="3"/><ellipse cx="1490" cy="1130" rx="236" ry="236.0" fill="none" stroke="#c3aa68" stroke-width="3"/><ellipse cx="1490" cy="1130" rx="262" ry="262.0" fill="none" stroke="#c3aa68" stroke-width="3"/>
<ellipse cx="1192.7" cy="1005.8" rx="13" ry="5.2" transform="rotate(-80.0 1192.7 1005.8)" fill="#b9577f"/><ellipse cx="1219.6" cy="923.2" rx="13" ry="5.2" transform="rotate(-64.0 1219.6 923.2)" fill="#b9577f"/><ellipse cx="1268.1" cy="851.2" rx="13" ry="5.2" transform="rotate(-48.0 1268.1 851.2)" fill="#b9577f"/><ellipse cx="1334.7" cy="795.4" rx="13" ry="5.2" transform="rotate(-32.0 1334.7 795.4)" fill="#b9577f"/>
<ellipse cx="1256.0" cy="1044.8" rx="13" ry="5.2" transform="rotate(-70.0 1256.0 1044.8)" fill="#b9577f"/><ellipse cx="1293.8" cy="976.7" rx="13" ry="5.2" transform="rotate(-52.0 1293.8 976.7)" fill="#b9577f"/><ellipse cx="1350.8" cy="923.6" rx="13" ry="5.2" transform="rotate(-34.0 1350.8 923.6)" fill="#b9577f"/><ellipse cx="1421.4" cy="890.6" rx="13" ry="5.2" transform="rotate(-16.0 1421.4 890.6)" fill="#b9577f"/>
<ellipse cx="1805" cy="763" rx="205" ry="180" fill="#faf0d0"/>
<ellipse cx="1805" cy="763" rx="41" ry="35.7" fill="none" stroke="#c3aa68" stroke-width="3"/><ellipse cx="1805" cy="763" rx="67" ry="58.3" fill="none" stroke="#c3aa68" stroke-width="3"/><ellipse cx="1805" cy="763" rx="94" ry="81.8" fill="none" stroke="#c3aa68" stroke-width="3"/><ellipse cx="1805" cy="763" rx="121" ry="105.3" fill="none" stroke="#c3aa68" stroke-width="3"/><ellipse cx="1805" cy="763" rx="148" ry="128.8" fill="none" stroke="#c3aa68" stroke-width="3"/><ellipse cx="1805" cy="763" rx="175" ry="152.2" fill="none" stroke="#c3aa68" stroke-width="3"/><ellipse cx="1805" cy="763" rx="202" ry="175.7" fill="none" stroke="#c3aa68" stroke-width="3"/>
<ellipse cx="1912.6" cy="771.2" rx="13" ry="5.2" transform="rotate(95.7 1912.6 771.2)" fill="#b9577f"/><ellipse cx="1893.5" cy="816.9" rx="13" ry="5.2" transform="rotate(128.8 1893.5 816.9)" fill="#b9577f"/><ellipse cx="1850.6" cy="848.2" rx="13" ry="5.2" transform="rotate(157.9 1850.6 848.2)" fill="#b9577f"/><ellipse cx="1795.6" cy="856.6" rx="13" ry="5.2" transform="rotate(-175.6 1795.6 856.6)" fill="#b9577f"/><ellipse cx="1743.1" cy="840.0" rx="13" ry="5.2" transform="rotate(-148.7 1743.1 840.0)" fill="#b9577f"/><ellipse cx="1707.1" cy="802.7" rx="13" ry="5.2" transform="rotate(-118.2 1707.1 802.7)" fill="#b9577f"/><ellipse cx="1697.4" cy="754.8" rx="13" ry="5.2" transform="rotate(-84.3 1697.4 754.8)" fill="#b9577f"/><ellipse cx="1716.5" cy="709.1" rx="13" ry="5.2" transform="rotate(-51.2 1716.5 709.1)" fill="#b9577f"/><ellipse cx="1759.4" cy="677.8" rx="13" ry="5.2" transform="rotate(-22.1 1759.4 677.8)" fill="#b9577f"/><ellipse cx="1814.4" cy="669.4" rx="13" ry="5.2" transform="rotate(4.4 1814.4 669.4)" fill="#b9577f"/><ellipse cx="1866.9" cy="686.0" rx="13" ry="5.2" transform="rotate(31.3 1866.9 686.0)" fill="#b9577f"/><ellipse cx="1902.9" cy="723.3" rx="13" ry="5.2" transform="rotate(61.8 1902.9 723.3)" fill="#b9577f"/>
<ellipse cx="1988.9" cy="797.0" rx="13" ry="5.2" transform="rotate(103.7 1988.9 797.0)" fill="#b9577f"/><ellipse cx="1964.4" cy="849.7" rx="13" ry="5.2" transform="rotate(125.7 1964.4 849.7)" fill="#b9577f"/><ellipse cx="1920.7" cy="891.9" rx="13" ry="5.2" transform="rotate(145.8 1920.7 891.9)" fill="#b9577f"/><ellipse cx="1863.1" cy="918.6" rx="13" ry="5.2" transform="rotate(164.2 1863.1 918.6)" fill="#b9577f"/><ellipse cx="1798.4" cy="926.5" rx="13" ry="5.2" transform="rotate(-178.3 1798.4 926.5)" fill="#b9577f"/><ellipse cx="1734.6" cy="914.7" rx="13" ry="5.2" transform="rotate(-160.6 1734.6 914.7)" fill="#b9577f"/><ellipse cx="1679.2" cy="884.5" rx="13" ry="5.2" transform="rotate(-141.9 1679.2 884.5)" fill="#b9577f"/><ellipse cx="1639.0" cy="839.8" rx="13" ry="5.2" transform="rotate(-121.4 1639.0 839.8)" fill="#b9577f"/><ellipse cx="1618.8" cy="785.8" rx="13" ry="5.2" transform="rotate(-99.2 1618.8 785.8)" fill="#b9577f"/><ellipse cx="1621.1" cy="729.0" rx="13" ry="5.2" transform="rotate(-76.3 1621.1 729.0)" fill="#b9577f"/><ellipse cx="1645.6" cy="676.3" rx="13" ry="5.2" transform="rotate(-54.3 1645.6 676.3)" fill="#b9577f"/><ellipse cx="1689.3" cy="634.1" rx="13" ry="5.2" transform="rotate(-34.2 1689.3 634.1)" fill="#b9577f"/><ellipse cx="1746.9" cy="607.4" rx="13" ry="5.2" transform="rotate(-15.8 1746.9 607.4)" fill="#b9577f"/><ellipse cx="1811.6" cy="599.5" rx="13" ry="5.2" transform="rotate(1.7 1811.6 599.5)" fill="#b9577f"/><ellipse cx="1875.4" cy="611.3" rx="13" ry="5.2" transform="rotate(19.4 1875.4 611.3)" fill="#b9577f"/><ellipse cx="1930.8" cy="641.5" rx="13" ry="5.2" transform="rotate(38.1 1930.8 641.5)" fill="#b9577f"/><ellipse cx="1971.0" cy="686.2" rx="13" ry="5.2" transform="rotate(58.6 1971.0 686.2)" fill="#b9577f"/><ellipse cx="1991.2" cy="740.2" rx="13" ry="5.2" transform="rotate(80.8 1991.2 740.2)" fill="#b9577f"/>
<path d="M1170.0 1250 L1170.0 1050 A240 216.0 0 0 1 1650.0 1050 L1650.0 1250 Z" fill="#faf0d0"/>
<path d="M1371.0 1250 L1371.0 1050 A39 35.1 0 0 1 1449.0 1050 L1449.0 1250" fill="none" stroke="#c3aa68" stroke-width="3"/><path d="M1348.0 1250 L1348.0 1050 A62 55.8 0 0 1 1472.0 1050 L1472.0 1250" fill="none" stroke="#c3aa68" stroke-width="3"/><path d="M1325.0 1250 L1325.0 1050 A85 76.5 0 0 1 1495.0 1050 L1495.0 1250" fill="none" stroke="#c3aa68" stroke-width="3"/><path d="M1302.0 1250 L1302.0 1050 A108 97.2 0 0 1 1518.0 1050 L1518.0 1250" fill="none" stroke="#c3aa68" stroke-width="3"/><path d="M1279.0 1250 L1279.0 1050 A131 117.9 0 0 1 1541.0 1050 L1541.0 1250" fill="none" stroke="#c3aa68" stroke-width="3"/><path d="M1256.0 1250 L1256.0 1050 A154 138.6 0 0 1 1564.0 1050 L1564.0 1250" fill="none" stroke="#c3aa68" stroke-width="3"/><path d="M1233.0 1250 L1233.0 1050 A177 159.3 0 0 1 1587.0 1050 L1587.0 1250" fill="none" stroke="#c3aa68" stroke-width="3"/><path d="M1210.0 1250 L1210.0 1050 A200 180.0 0 0 1 1610.0 1050 L1610.0 1250" fill="none" stroke="#c3aa68" stroke-width="3"/><path d="M1187.0 1250 L1187.0 1050 A223 200.7 0 0 1 1633.0 1050 L1633.0 1250" fill="none" stroke="#c3aa68" stroke-width="3"/>
<ellipse cx="1336.3" cy="1044.2" rx="13" ry="5.2" transform="rotate(-84.4 1336.3 1044.2)" fill="#b9577f"/><ellipse cx="1354.2" cy="1006.3" rx="13" ry="5.2" transform="rotate(-46.0 1354.2 1006.3)" fill="#b9577f"/><ellipse cx="1393.4" cy="985.1" rx="13" ry="5.2" transform="rotate(-11.7 1393.4 985.1)" fill="#b9577f"/><ellipse cx="1438.9" cy="988.7" rx="13" ry="5.2" transform="rotate(20.9 1438.9 988.7)" fill="#b9577f"/><ellipse cx="1473.4" cy="1015.7" rx="13" ry="5.2" transform="rotate(56.3 1473.4 1015.7)" fill="#b9577f"/>
<ellipse cx="1270.1" cy="1023.2" rx="13" ry="5.2" transform="rotate(-76.7 1270.1 1023.2)" fill="#b9577f"/><ellipse cx="1291.4" cy="978.0" rx="13" ry="5.2" transform="rotate(-53.2 1291.4 978.0)" fill="#b9577f"/><ellipse cx="1330.0" cy="943.3" rx="13" ry="5.2" transform="rotate(-31.3 1330.0 943.3)" fill="#b9577f"/><ellipse cx="1380.3" cy="924.1" rx="13" ry="5.2" transform="rotate(-10.8 1380.3 924.1)" fill="#b9577f"/><ellipse cx="1434.8" cy="923.3" rx="13" ry="5.2" transform="rotate(9.0 1434.8 923.3)" fill="#b9577f"/><ellipse cx="1485.8" cy="940.9" rx="13" ry="5.2" transform="rotate(29.4 1485.8 940.9)" fill="#b9577f"/><ellipse cx="1525.7" cy="974.4" rx="13" ry="5.2" transform="rotate(51.1 1525.7 974.4)" fill="#b9577f"/><ellipse cx="1548.8" cy="1018.9" rx="13" ry="5.2" transform="rotate(74.5 1548.8 1018.9)" fill="#b9577f"/>
<ellipse cx="1209.6" cy="987.9" rx="13" ry="5.2" transform="rotate(-69.1 1209.6 987.9)" fill="#b9577f"/><ellipse cx="1236.3" cy="940.6" rx="13" ry="5.2" transform="rotate(-52.1 1236.3 940.6)" fill="#b9577f"/><ellipse cx="1276.6" cy="901.7" rx="13" ry="5.2" transform="rotate(-36.1 1276.6 901.7)" fill="#b9577f"/><ellipse cx="1327.2" cy="874.4" rx="13" ry="5.2" transform="rotate(-20.9 1327.2 874.4)" fill="#b9577f"/><ellipse cx="1384.2" cy="860.6" rx="13" ry="5.2" transform="rotate(-6.3 1384.2 860.6)" fill="#b9577f"/><ellipse cx="1443.2" cy="861.5" rx="13" ry="5.2" transform="rotate(8.1 1443.2 861.5)" fill="#b9577f"/><ellipse cx="1499.6" cy="877.1" rx="13" ry="5.2" transform="rotate(22.8 1499.6 877.1)" fill="#b9577f"/><ellipse cx="1549.1" cy="906.0" rx="13" ry="5.2" transform="rotate(38.0 1549.1 906.0)" fill="#b9577f"/><ellipse cx="1587.8" cy="946.1" rx="13" ry="5.2" transform="rotate(54.2 1587.8 946.1)" fill="#b9577f"/><ellipse cx="1612.7" cy="994.2" rx="13" ry="5.2" transform="rotate(71.2 1612.7 994.2)" fill="#b9577f"/>
<path d="M1514.0 1175 L1514.0 975 A192 115.2 0 0 1 1898.0 975 L1898.0 1175 Z" fill="#faf0d0"/>
<path d="M1660.0 1175 L1660.0 975 A46 34.0 0 0 1 1752.0 975 L1752.0 1175" fill="none" stroke="#c3aa68" stroke-width="3"/><path d="M1627.0 1175 L1627.0 975 A79 58.5 0 0 1 1785.0 975 L1785.0 1175" fill="none" stroke="#c3aa68" stroke-width="3"/><path d="M1594.0 1175 L1594.0 975 A112 82.9 0 0 1 1818.0 975 L1818.0 1175" fill="none" stroke="#c3aa68" stroke-width="3"/><path d="M1561.0 1175 L1561.0 975 A145 107.3 0 0 1 1851.0 975 L1851.0 1175" fill="none" stroke="#c3aa68" stroke-width="3"/><path d="M1528.0 1175 L1528.0 975 A178 131.7 0 0 1 1884.0 975 L1884.0 1175" fill="none" stroke="#c3aa68" stroke-width="3"/>
<ellipse cx="1644.2" cy="971.0" rx="13" ry="5.2" transform="rotate(-83.3 1644.2 971.0)" fill="#b9577f"/><ellipse cx="1662.2" cy="942.6" rx="13" ry="5.2" transform="rotate(-36.5 1662.2 942.6)" fill="#b9577f"/><ellipse cx="1700.6" cy="929.3" rx="13" ry="5.2" transform="rotate(-3.7 1700.6 929.3)" fill="#b9577f"/><ellipse cx="1741.6" cy="937.4" rx="13" ry="5.2" transform="rotate(27.4 1741.6 937.4)" fill="#b9577f"/><ellipse cx="1765.9" cy="963.1" rx="13" ry="5.2" transform="rotate(70.1 1765.9 963.1)" fill="#b9577f"/>
<ellipse cx="1581.8" cy="952.1" rx="13" ry="5.2" transform="rotate(-71.4 1581.8 952.1)" fill="#b9577f"/><ellipse cx="1607.9" cy="914.1" rx="13" ry="5.2" transform="rotate(-41.4 1607.9 914.1)" fill="#b9577f"/><ellipse cx="1653.9" cy="888.5" rx="13" ry="5.2" transform="rotate(-18.2 1653.9 888.5)" fill="#b9577f"/><ellipse cx="1710.5" cy="880.3" rx="13" ry="5.2" transform="rotate(1.5 1710.5 880.3)" fill="#b9577f"/><ellipse cx="1766.1" cy="891.4" rx="13" ry="5.2" transform="rotate(21.5 1766.1 891.4)" fill="#b9577f"/><ellipse cx="1809.6" cy="919.3" rx="13" ry="5.2" transform="rotate(45.5 1809.6 919.3)" fill="#b9577f"/><ellipse cx="1832.1" cy="958.6" rx="13" ry="5.2" transform="rotate(76.6 1832.1 958.6)" fill="#b9577f"/>
<ellipse cx="1557.8" cy="928.4" rx="13" ry="5.2" transform="rotate(-60.2 1557.8 928.4)" fill="#b9577f"/><ellipse cx="1592.2" cy="890.8" rx="13" ry="5.2" transform="rotate(-36.5 1592.2 890.8)" fill="#b9577f"/><ellipse cx="1643.1" cy="865.3" rx="13" ry="5.2" transform="rotate(-17.4 1643.1 865.3)" fill="#b9577f"/><ellipse cx="1703.2" cy="855.9" rx="13" ry="5.2" transform="rotate(-0.7 1703.2 855.9)" fill="#b9577f"/><ellipse cx="1763.7" cy="863.8" rx="13" ry="5.2" transform="rotate(15.9 1763.7 863.8)" fill="#b9577f"/><ellipse cx="1815.8" cy="887.9" rx="13" ry="5.2" transform="rotate(34.6 1815.8 887.9)" fill="#b9577f"/><ellipse cx="1851.9" cy="924.6" rx="13" ry="5.2" transform="rotate(57.8 1851.9 924.6)" fill="#b9577f"/>
</g>
<path d="M1205 1091 C1212 1080 1218 1072 1216 1060 C1212 1030 1206 990 1210 955 C1214 900 1235 850 1270 815 C1300 785 1335 755 1368 726 L1372 742 C1350 760 1325 782 1300 805 C1268 835 1245 865 1232 905 C1222 940 1222 990 1230 1030 L1230 1062 Z" fill="#fdfcf4"/>
<path d="M1205 1091 C1212 1080 1218 1072 1216 1060 C1212 1030 1206 990 1210 955 C1214 900 1235 850 1270 815 C1300 785 1335 755 1368 726" fill="none" stroke="#8e8c84" stroke-width="2"/>
<path d="M1372 742 C1350 760 1325 782 1300 805 C1268 835 1245 865 1232 905 C1222 940 1222 990 1230 1030" fill="none" stroke="#a99d78" stroke-width="1.8"/>
<path d="M1216 1062 C1213 1078 1207 1088 1195 1103 C1190 1200 1188 1400 1184 1534 L1192 1541 C1205 1520 1222 1495 1232 1478 L1230 1062 C1225 1060 1220 1060 1216 1062 Z" fill="#f6e9c0" stroke="#8e8a7c" stroke-width="2"/>
<path d="M1195 1103 C1190 1200 1188 1400 1184 1534 L1192 1541 C1196 1534 1199 1526 1201 1518 C1201 1400 1203 1200 1207 1096 Z" fill="#fdfbf2" stroke="#8e8a7c" stroke-width="1.6"/>
<path d="M1217 1085 C1216 1200 1215 1400 1214 1508" fill="none" stroke="#b9a262" stroke-width="2.6"/>
<path d="M1230 1048 C1238 1068 1252 1082 1268 1089 L1272 1549 C1258 1530 1240 1500 1232 1478 Z" fill="url(#ocl)" stroke="#9a8550" stroke-width="1.5"/>
<path d="M1373 1073 L1380 1058 L1437 1044 L1457 1057 L1457 1511 L1375 1526 Z" fill="#cdb877"/>
<path d="M1679 1011 L1684 1000 L1741 1003 L1753 996 L1753 1452 L1685 1459 Z" fill="#cdb877"/>
<path d="M1268.0 1089.0 L1373.0 1073.0 L1375.0 1526.0 L1272.0 1549.0 Z" fill="#f8ebbd" stroke="#8c8062" stroke-width="1.8"/>
<path d="M1457.0 1057.0 L1679.0 1011.0 L1685.0 1459.0 L1457.0 1511.0 Z" fill="#f8ebbd" stroke="#8c8062" stroke-width="1.8"/>
<path d="M1750.0 996.0 L1896.0 969.0 L1993.0 960.0 L1972.0 1406.0 L1753.0 1452.0 Z" fill="#f8ebbd" stroke="#8c8062" stroke-width="1.8"/>
<path d="M1294.0 1085.0 L1295.0 1543.3" stroke="#b9a262" stroke-width="3"/><path d="M1321.0 1080.9 L1322.0 1537.4" stroke="#b9a262" stroke-width="3"/><path d="M1348.0 1076.8 L1349.0 1531.5" stroke="#b9a262" stroke-width="3"/>
<path d="M1473.0 1053.7 L1474.0 1507.3" stroke="#b9a262" stroke-width="3"/><path d="M1496.0 1048.9 L1497.0 1501.9" stroke="#b9a262" stroke-width="3"/><path d="M1520.0 1043.9 L1521.0 1496.2" stroke="#b9a262" stroke-width="3"/><path d="M1540.0 1039.8 L1541.0 1491.6" stroke="#b9a262" stroke-width="3"/><path d="M1549.0 1037.9 L1550.0 1489.5" stroke="#b9a262" stroke-width="3"/><path d="M1581.0 1031.3 L1582.0 1482.0" stroke="#b9a262" stroke-width="3"/><path d="M1613.0 1024.7 L1614.0 1474.5" stroke="#b9a262" stroke-width="3"/><path d="M1645.0 1018.0 L1646.0 1467.0" stroke="#b9a262" stroke-width="3"/>
<path d="M1778.0 990.8 L1779.0 1445.9" stroke="#b9a262" stroke-width="3"/><path d="M1806.0 985.6 L1807.0 1439.7" stroke="#b9a262" stroke-width="3"/><path d="M1835.0 980.3 L1836.0 1433.4" stroke="#b9a262" stroke-width="3"/><path d="M1860.0 975.7 L1861.0 1427.9" stroke="#b9a262" stroke-width="3"/><path d="M1885.0 971.0 L1886.0 1422.4" stroke="#b9a262" stroke-width="3"/>
<ellipse cx="1294.5" cy="1130.0" rx="3.8" ry="14" fill="#ad5570" opacity=".92"/><ellipse cx="1294.5" cy="1212.0" rx="3.8" ry="14" fill="#ad5570" opacity=".92"/><ellipse cx="1294.5" cy="1294.0" rx="3.8" ry="14" fill="#ad5570" opacity=".92"/><ellipse cx="1294.5" cy="1376.0" rx="3.8" ry="14" fill="#ad5570" opacity=".92"/><ellipse cx="1294.5" cy="1458.0" rx="3.8" ry="14" fill="#ad5570" opacity=".92"/><ellipse cx="1348.5" cy="1171.0" rx="3.8" ry="14" fill="#ad5570" opacity=".92"/><ellipse cx="1348.5" cy="1253.0" rx="3.8" ry="14" fill="#ad5570" opacity=".92"/><ellipse cx="1348.5" cy="1335.0" rx="3.8" ry="14" fill="#ad5570" opacity=".92"/><ellipse cx="1348.5" cy="1417.0" rx="3.8" ry="14" fill="#ad5570" opacity=".92"/><ellipse cx="1348.5" cy="1499.0" rx="3.8" ry="14" fill="#ad5570" opacity=".92"/>
<ellipse cx="1473.5" cy="1090.0" rx="3.8" ry="14" fill="#ad5570" opacity=".92"/><ellipse cx="1473.5" cy="1174.0" rx="3.8" ry="14" fill="#ad5570" opacity=".92"/><ellipse cx="1473.5" cy="1258.0" rx="3.8" ry="14" fill="#ad5570" opacity=".92"/><ellipse cx="1473.5" cy="1342.0" rx="3.8" ry="14" fill="#ad5570" opacity=".92"/><ellipse cx="1473.5" cy="1426.0" rx="3.8" ry="14" fill="#ad5570" opacity=".92"/><ellipse cx="1520.5" cy="1121.0" rx="3.8" ry="14" fill="#ad5570" opacity=".92"/><ellipse cx="1520.5" cy="1205.0" rx="3.8" ry="14" fill="#ad5570" opacity=".92"/><ellipse cx="1520.5" cy="1289.0" rx="3.8" ry="14" fill="#ad5570" opacity=".92"/><ellipse cx="1520.5" cy="1373.0" rx="3.8" ry="14" fill="#ad5570" opacity=".92"/><ellipse cx="1520.5" cy="1457.0" rx="3.8" ry="14" fill="#ad5570" opacity=".92"/><ellipse cx="1540.5" cy="1152.0" rx="3.8" ry="14" fill="#ad5570" opacity=".92"/><ellipse cx="1540.5" cy="1236.0" rx="3.8" ry="14" fill="#ad5570" opacity=".92"/><ellipse cx="1540.5" cy="1320.0" rx="3.8" ry="14" fill="#ad5570" opacity=".92"/><ellipse cx="1540.5" cy="1404.0" rx="3.8" ry="14" fill="#ad5570" opacity=".92"/><ellipse cx="1581.5" cy="1099.0" rx="3.8" ry="14" fill="#ad5570" opacity=".92"/><ellipse cx="1581.5" cy="1183.0" rx="3.8" ry="14" fill="#ad5570" opacity=".92"/><ellipse cx="1581.5" cy="1267.0" rx="3.8" ry="14" fill="#ad5570" opacity=".92"/><ellipse cx="1581.5" cy="1351.0" rx="3.8" ry="14" fill="#ad5570" opacity=".92"/><ellipse cx="1581.5" cy="1435.0" rx="3.8" ry="14" fill="#ad5570" opacity=".92"/><ellipse cx="1613.5" cy="1130.0" rx="3.8" ry="14" fill="#ad5570" opacity=".92"/><ellipse cx="1613.5" cy="1214.0" rx="3.8" ry="14" fill="#ad5570" opacity=".92"/><ellipse cx="1613.5" cy="1298.0" rx="3.8" ry="14" fill="#ad5570" opacity=".92"/><ellipse cx="1613.5" cy="1382.0" rx="3.8" ry="14" fill="#ad5570" opacity=".92"/><ellipse cx="1613.5" cy="1466.0" rx="3.8" ry="14" fill="#ad5570" opacity=".92"/><ellipse cx="1645.5" cy="1161.0" rx="3.8" ry="14" fill="#ad5570" opacity=".92"/><ellipse cx="1645.5" cy="1245.0" rx="3.8" ry="14" fill="#ad5570" opacity=".92"/><ellipse cx="1645.5" cy="1329.0" rx="3.8" ry="14" fill="#ad5570" opacity=".92"/><ellipse cx="1645.5" cy="1413.0" rx="3.8" ry="14" fill="#ad5570" opacity=".92"/>
<ellipse cx="1778.5" cy="1030.0" rx="3.8" ry="14" fill="#ad5570" opacity=".92"/><ellipse cx="1778.5" cy="1114.0" rx="3.8" ry="14" fill="#ad5570" opacity=".92"/><ellipse cx="1778.5" cy="1198.0" rx="3.8" ry="14" fill="#ad5570" opacity=".92"/><ellipse cx="1778.5" cy="1282.0" rx="3.8" ry="14" fill="#ad5570" opacity=".92"/><ellipse cx="1778.5" cy="1366.0" rx="3.8" ry="14" fill="#ad5570" opacity=".92"/><ellipse cx="1835.5" cy="1072.0" rx="3.8" ry="14" fill="#ad5570" opacity=".92"/><ellipse cx="1835.5" cy="1156.0" rx="3.8" ry="14" fill="#ad5570" opacity=".92"/><ellipse cx="1835.5" cy="1240.0" rx="3.8" ry="14" fill="#ad5570" opacity=".92"/><ellipse cx="1835.5" cy="1324.0" rx="3.8" ry="14" fill="#ad5570" opacity=".92"/><ellipse cx="1835.5" cy="1408.0" rx="3.8" ry="14" fill="#ad5570" opacity=".92"/><ellipse cx="1860.5" cy="1030.0" rx="3.8" ry="14" fill="#ad5570" opacity=".92"/><ellipse cx="1860.5" cy="1114.0" rx="3.8" ry="14" fill="#ad5570" opacity=".92"/><ellipse cx="1860.5" cy="1198.0" rx="3.8" ry="14" fill="#ad5570" opacity=".92"/><ellipse cx="1860.5" cy="1282.0" rx="3.8" ry="14" fill="#ad5570" opacity=".92"/><ellipse cx="1860.5" cy="1366.0" rx="3.8" ry="14" fill="#ad5570" opacity=".92"/>
<path d="M1373 1073 L1391 1060 L1391 1520 L1375 1526 Z" fill="#b8a360"/>
<path d="M1437 1044 L1457 1057 L1457 1511 L1440 1505 Z" fill="#c9b36a"/>
<path d="M1675 1011 L1684 1000 L1686 1458 L1679 1459 Z" fill="#b8a360"/>
<path d="M1741 1003 L1753 996 L1753 1452 L1745 1450 Z" fill="#c9b36a"/>
<path d="M1391.0 1022.0 L1394.0 1200.0 L1400.0 1400.0 L1404.0 1538.0" fill="none" stroke="#2f3e55" stroke-width="24" stroke-linecap="round" stroke-linejoin="round"/><path d="M1391.0 1022.0 L1394.0 1200.0 L1400.0 1400.0 L1404.0 1538.0" fill="none" stroke="#3f78b8" stroke-width="20" stroke-linecap="round" stroke-linejoin="round"/>
<path d="M1410.0 1034.0 L1414.0 1200.0 L1419.0 1400.0 L1422.0 1534.0" fill="none" stroke="#5a2a22" stroke-width="24" stroke-linecap="round" stroke-linejoin="round"/><path d="M1410.0 1034.0 L1414.0 1200.0 L1419.0 1400.0 L1422.0 1534.0" fill="none" stroke="#e4513a" stroke-width="20" stroke-linecap="round" stroke-linejoin="round"/>
<path d="M1432.0 1034.0 L1435.0 1200.0 L1438.0 1390.0 L1441.0 1532.0" fill="none" stroke="#6b6030" stroke-width="13.6" stroke-linecap="round" stroke-linejoin="round"/><path d="M1432.0 1034.0 L1435.0 1200.0 L1438.0 1390.0 L1441.0 1532.0" fill="none" stroke="#f7ea2e" stroke-width="10" stroke-linecap="round" stroke-linejoin="round"/>
<path d="M1692.0 942.0 L1696.0 1100.0 L1700.0 1300.0 L1703.0 1494.0" fill="none" stroke="#2f3e55" stroke-width="25" stroke-linecap="round" stroke-linejoin="round"/><path d="M1692.0 942.0 L1696.0 1100.0 L1700.0 1300.0 L1703.0 1494.0" fill="none" stroke="#3f78b8" stroke-width="21" stroke-linecap="round" stroke-linejoin="round"/>
<path d="M1715.0 946.0 L1718.0 1100.0 L1722.0 1300.0 L1725.0 1474.0" fill="none" stroke="#5a2a22" stroke-width="25" stroke-linecap="round" stroke-linejoin="round"/><path d="M1715.0 946.0 L1718.0 1100.0 L1722.0 1300.0 L1725.0 1474.0" fill="none" stroke="#e4513a" stroke-width="21" stroke-linecap="round" stroke-linejoin="round"/>
<path d="M1734.0 950.0 L1735.0 1100.0 L1740.0 1300.0 L1744.0 1478.0" fill="none" stroke="#6b6030" stroke-width="13.6" stroke-linecap="round" stroke-linejoin="round"/><path d="M1734.0 950.0 L1735.0 1100.0 L1740.0 1300.0 L1744.0 1478.0" fill="none" stroke="#f7ea2e" stroke-width="10" stroke-linecap="round" stroke-linejoin="round"/>
<path d="M1420 1412 C1445 1405 1460 1370 1500 1362 C1560 1352 1600 1335 1640 1318 C1670 1304 1690 1285 1722 1276" fill="none" stroke="#5a2a22" stroke-width="26" stroke-linecap="round" stroke-linejoin="round"/><path d="M1420 1412 C1445 1405 1460 1370 1500 1362 C1560 1352 1600 1335 1640 1318 C1670 1304 1690 1285 1722 1276" fill="none" stroke="#e4513a" stroke-width="22" stroke-linecap="round" stroke-linejoin="round"/>
<path d="M1436 1362 C1470 1350 1500 1335 1555 1322 C1600 1312 1640 1290 1700 1262" fill="none" stroke="#2f3e55" stroke-width="17" stroke-linecap="round" stroke-linejoin="round"/><path d="M1436 1362 C1470 1350 1500 1335 1555 1322 C1600 1312 1640 1290 1700 1262" fill="none" stroke="#3f78b8" stroke-width="13" stroke-linecap="round" stroke-linejoin="round"/>
<path d="M1434 1342 C1470 1330 1495 1320 1550 1314 C1600 1306 1640 1285 1730 1252" fill="none" stroke="#6b6030" stroke-width="12.2" stroke-linecap="round" stroke-linejoin="round"/><path d="M1434 1342 C1470 1330 1495 1320 1550 1314 C1600 1306 1640 1285 1730 1252" fill="none" stroke="#f7ea2e" stroke-width="9" stroke-linecap="round" stroke-linejoin="round"/>
<path d="M1740 1053 C1800 1045 1850 1035 1905 1030" fill="none" stroke="#5a2a22" stroke-width="26" stroke-linecap="round" stroke-linejoin="round"/><path d="M1740 1053 C1800 1045 1850 1035 1905 1030" fill="none" stroke="#e4513a" stroke-width="22" stroke-linecap="round" stroke-linejoin="round"/>
<path d="M1740 1075 C1800 1066 1850 1056 1905 1046" fill="none" stroke="#2f3e55" stroke-width="18" stroke-linecap="round" stroke-linejoin="round"/><path d="M1740 1075 C1800 1066 1850 1056 1905 1046" fill="none" stroke="#3f78b8" stroke-width="14" stroke-linecap="round" stroke-linejoin="round"/>
<path d="M1740 1098 C1760 1080 1800 1070 1880 1046" fill="none" stroke="#6b6030" stroke-width="12.2" stroke-linecap="round" stroke-linejoin="round"/><path d="M1740 1098 C1760 1080 1800 1070 1880 1046" fill="none" stroke="#f7ea2e" stroke-width="9" stroke-linecap="round" stroke-linejoin="round"/>
<path d="M1752 1338 C1800 1322 1850 1308 1888 1302" fill="none" stroke="#2f3e55" stroke-width="22" stroke-linecap="round" stroke-linejoin="round"/><path d="M1752 1338 C1800 1322 1850 1308 1888 1302" fill="none" stroke="#3f78b8" stroke-width="18" stroke-linecap="round" stroke-linejoin="round"/>
<path d="M1745 1372 C1790 1352 1850 1336 1892 1332" fill="none" stroke="#5a2a22" stroke-width="24" stroke-linecap="round" stroke-linejoin="round"/><path d="M1745 1372 C1790 1352 1850 1336 1892 1332" fill="none" stroke="#e4513a" stroke-width="20" stroke-linecap="round" stroke-linejoin="round"/>
<path d="M1365 690 L1368 812 A136 112 0 0 0 1637 812 L1638 690 Z" fill="url(#cyl)" stroke="#2d2a22" stroke-width="2.5"/>
<path d="M1460 780 C1540 800 1600 760 1637 730 L1637 812 C1620 870 1580 900 1540 915 C1600 860 1610 820 1560 800 C1520 790 1480 790 1460 780 Z" fill="#f4d488" opacity=".85"/>
<ellipse cx="1501.5" cy="683" rx="136.5" ry="110" fill="#fbf3da" stroke="#2d2a22" stroke-width="2.5"/>
<clipPath id="ctopc"><ellipse cx="1501.5" cy="683" rx="135" ry="108.5"/></clipPath><g clip-path="url(#ctopc)">
<ellipse cx="1503" cy="690" rx="48" ry="38.4" fill="none" stroke="#c3aa68" stroke-width="3"/><ellipse cx="1503" cy="690" rx="70" ry="56.0" fill="none" stroke="#c3aa68" stroke-width="3"/><ellipse cx="1503" cy="690" rx="92" ry="73.6" fill="none" stroke="#c3aa68" stroke-width="3"/><ellipse cx="1503" cy="690" rx="114" ry="91.2" fill="none" stroke="#c3aa68" stroke-width="3"/><ellipse cx="1503" cy="690" rx="136" ry="108.8" fill="none" stroke="#c3aa68" stroke-width="3"/>
<ellipse cx="1581.2" cy="706.8" rx="13" ry="5.2" transform="rotate(108.5 1581.2 706.8)" fill="#b9577f"/><ellipse cx="1543.5" cy="746.1" rx="13" ry="5.2" transform="rotate(155.2 1543.5 746.1)" fill="#b9577f"/><ellipse cx="1482.0" cy="752.6" rx="13" ry="5.2" transform="rotate(-167.9 1482.0 752.6)" fill="#b9577f"/><ellipse cx="1432.9" cy="722.4" rx="13" ry="5.2" transform="rotate(-125.8 1432.9 722.4)" fill="#b9577f"/><ellipse cx="1424.8" cy="673.2" rx="13" ry="5.2" transform="rotate(-71.5 1424.8 673.2)" fill="#b9577f"/><ellipse cx="1462.5" cy="633.9" rx="13" ry="5.2" transform="rotate(-24.8 1462.5 633.9)" fill="#b9577f"/><ellipse cx="1524.0" cy="627.4" rx="13" ry="5.2" transform="rotate(12.1 1524.0 627.4)" fill="#b9577f"/><ellipse cx="1573.1" cy="657.6" rx="13" ry="5.2" transform="rotate(54.2 1573.1 657.6)" fill="#b9577f"/>
<ellipse cx="1628.0" cy="690.0" rx="13" ry="5.2" transform="rotate(90.0 1628.0 690.0)" fill="#b9577f"/><ellipse cx="1611.3" cy="740.0" rx="13" ry="5.2" transform="rotate(125.8 1611.3 740.0)" fill="#b9577f"/><ellipse cx="1565.5" cy="776.6" rx="13" ry="5.2" transform="rotate(155.2 1565.5 776.6)" fill="#b9577f"/><ellipse cx="1503.0" cy="790.0" rx="13" ry="5.2" transform="rotate(180.0 1503.0 790.0)" fill="#b9577f"/><ellipse cx="1440.5" cy="776.6" rx="13" ry="5.2" transform="rotate(-155.2 1440.5 776.6)" fill="#b9577f"/><ellipse cx="1394.7" cy="740.0" rx="13" ry="5.2" transform="rotate(-125.8 1394.7 740.0)" fill="#b9577f"/><ellipse cx="1378.0" cy="690.0" rx="13" ry="5.2" transform="rotate(-90.0 1378.0 690.0)" fill="#b9577f"/><ellipse cx="1394.7" cy="640.0" rx="13" ry="5.2" transform="rotate(-54.2 1394.7 640.0)" fill="#b9577f"/><ellipse cx="1440.5" cy="603.4" rx="13" ry="5.2" transform="rotate(-24.8 1440.5 603.4)" fill="#b9577f"/><ellipse cx="1503.0" cy="590.0" rx="13" ry="5.2" transform="rotate(-0.0 1503.0 590.0)" fill="#b9577f"/><ellipse cx="1565.5" cy="603.4" rx="13" ry="5.2" transform="rotate(24.8 1565.5 603.4)" fill="#b9577f"/><ellipse cx="1611.3" cy="640.0" rx="13" ry="5.2" transform="rotate(54.2 1611.3 640.0)" fill="#b9577f"/><ellipse cx="1628.0" cy="690.0" rx="13" ry="5.2" transform="rotate(90.0 1628.0 690.0)" fill="#b9577f"/>
</g>
<ellipse cx="1503" cy="686" rx="33" ry="24" fill="#e9d9a6" stroke="#222" stroke-width="2.5"/>
<path d="M1478.0 617.0 L1493.0 706.0" fill="none" stroke="#2f3e55" stroke-width="21" stroke-linecap="round" stroke-linejoin="round"/><path d="M1478.0 617.0 L1493.0 706.0" fill="none" stroke="#3f78b8" stroke-width="17" stroke-linecap="round" stroke-linejoin="round"/>
<path d="M1504.0 630.0 L1512.0 708.0" fill="none" stroke="#5a2a22" stroke-width="21" stroke-linecap="round" stroke-linejoin="round"/><path d="M1504.0 630.0 L1512.0 708.0" fill="none" stroke="#e4513a" stroke-width="17" stroke-linecap="round" stroke-linejoin="round"/>
<ellipse cx="1805" cy="763" rx="32" ry="21" fill="#e9d9a6" stroke="#222" stroke-width="2.5"/>
<path d="M1784.0 679.0 L1789.0 730.0 L1795.0 779.0" fill="none" stroke="#2f3e55" stroke-width="21" stroke-linecap="round" stroke-linejoin="round"/><path d="M1784.0 679.0 L1789.0 730.0 L1795.0 779.0" fill="none" stroke="#3f78b8" stroke-width="17" stroke-linecap="round" stroke-linejoin="round"/>
<path d="M1813.0 691.0 L1815.0 740.0 L1817.0 779.0" fill="none" stroke="#5a2a22" stroke-width="20" stroke-linecap="round" stroke-linejoin="round"/><path d="M1813.0 691.0 L1815.0 740.0 L1817.0 779.0" fill="none" stroke="#e4513a" stroke-width="16" stroke-linecap="round" stroke-linejoin="round"/>
<path d="M1896 969 L1993 960 L1993 842 C1985 822 1965 810 1952 805 L1933 789 L1912 800 L1885 880 L1868 975 Z" fill="#faf0d0"/>
<path d="M1868 975 L1993 960 L1972 1406 L1893 1420 L1880 1300 L1870 1100 Z" fill="#f8efcd"/>
<path d="M1960 890 C1975 885 1985 895 1980 910 L1964 990 L1968 1230 L1972 1310 C1962 1302 1955 1290 1945 1280 C1935 1268 1928 1250 1932 1230 C1936 1210 1944 1195 1940 1170 C1936 1140 1932 1120 1938 1090 C1942 1060 1935 1040 1925 1020 C1915 1000 1920 980 1930 965 C1940 950 1952 930 1950 910 C1950 900 1954 893 1960 890 Z" fill="#b9a363" stroke="#7d6b3a" stroke-width="2"/>
<path d="M1925 830 C1935 815 1960 815 1962 832 C1964 848 1955 866 1940 866 C1925 866 1918 845 1925 830 Z" fill="#b9a363" stroke="#7d6b3a" stroke-width="2"/>
<path d="M1950 845 C1965 828 1992 835 1990 860 C1988 880 1980 898 1962 900 C1945 900 1940 865 1950 845 Z" fill="#b9a363" stroke="#7d6b3a" stroke-width="2"/>
<ellipse cx="1914" cy="962" rx="20" ry="38" fill="#b9a363" stroke="#7d6b3a" stroke-width="2"/>
<ellipse cx="1912" cy="975" rx="7" ry="6" fill="#6b4a20" opacity=".75"/>
<ellipse cx="1928" cy="1230" rx="26" ry="30" fill="#b9a363" stroke="#7d6b3a" stroke-width="2"/>
<ellipse cx="1950" cy="850" rx="6" ry="8" fill="#6b4a20" opacity=".75"/>
<ellipse cx="1968" cy="880" rx="5" ry="6" fill="#6b4a20" opacity=".75"/>
<ellipse cx="1955" cy="1110" rx="6" ry="7" fill="#6b4a20" opacity=".75"/>
<ellipse cx="1948" cy="1045" rx="5" ry="6" fill="#6b4a20" opacity=".75"/>
<ellipse cx="1940" cy="1180" rx="5" ry="6" fill="#6b4a20" opacity=".75"/>
<ellipse cx="1952" cy="1240" rx="6" ry="5" fill="#6b4a20" opacity=".75"/>
<ellipse cx="1920" cy="960" rx="8" ry="6" fill="#6b4a20" opacity=".75"/>
<ellipse cx="1945" cy="980" rx="5" ry="5" fill="#6b4a20" opacity=".75"/>
<ellipse cx="1912" cy="893" rx="18" ry="15" fill="#b9a363" stroke="#7d6b3a" stroke-width="2"/>
<ellipse cx="1913" cy="895" rx="6" ry="4" fill="#6b4a20" opacity=".7"/>
<ellipse cx="1863" cy="907" rx="10" ry="10" fill="#b9a363" stroke="#7d6b3a" stroke-width="2"/>
<ellipse cx="1864" cy="909" rx="4" ry="3" fill="#6b4a20" opacity=".7"/>
<ellipse cx="1883" cy="935" rx="15" ry="15" fill="#b9a363" stroke="#7d6b3a" stroke-width="2"/>
<ellipse cx="1884" cy="937" rx="5" ry="4" fill="#6b4a20" opacity=".7"/>
<ellipse cx="1912" cy="1067" rx="15" ry="15" fill="#b9a363" stroke="#7d6b3a" stroke-width="2"/>
<ellipse cx="1913" cy="1069" rx="5" ry="4" fill="#6b4a20" opacity=".7"/>
<ellipse cx="1895" cy="1122" rx="18" ry="19" fill="#b9a363" stroke="#7d6b3a" stroke-width="2"/>
<ellipse cx="1896" cy="1124" rx="6" ry="6" fill="#6b4a20" opacity=".7"/>
<ellipse cx="1912" cy="1168" rx="17" ry="18" fill="#b9a363" stroke="#7d6b3a" stroke-width="2"/>
<ellipse cx="1913" cy="1170" rx="6" ry="5" fill="#6b4a20" opacity=".7"/>
<ellipse cx="1881" cy="1221" rx="11" ry="19" fill="#b9a363" stroke="#7d6b3a" stroke-width="2"/>
<ellipse cx="1882" cy="1223" rx="4" ry="6" fill="#6b4a20" opacity=".7"/>
<ellipse cx="1906" cy="1258" rx="13" ry="14" fill="#b9a363" stroke="#7d6b3a" stroke-width="2"/>
<ellipse cx="1907" cy="1260" rx="5" ry="4" fill="#6b4a20" opacity=".7"/>
<ellipse cx="1924" cy="1299" rx="15" ry="15" fill="#b9a363" stroke="#7d6b3a" stroke-width="2"/>
<ellipse cx="1925" cy="1301" rx="5" ry="4" fill="#6b4a20" opacity=".7"/>
<ellipse cx="1917" cy="1332" rx="14" ry="15" fill="#b9a363" stroke="#7d6b3a" stroke-width="2"/>
<ellipse cx="1918" cy="1334" rx="5" ry="4" fill="#6b4a20" opacity=".7"/>
<ellipse cx="1889" cy="1368" rx="11" ry="12" fill="#b9a363" stroke="#7d6b3a" stroke-width="2"/>
<ellipse cx="1890" cy="1370" rx="4" ry="4" fill="#6b4a20" opacity=".7"/>
<ellipse cx="1932" cy="1374" rx="24" ry="19" fill="#b9a363" stroke="#7d6b3a" stroke-width="2"/>
<ellipse cx="1933" cy="1376" rx="8" ry="6" fill="#6b4a20" opacity=".7"/>
<path d="M1893 1110 L1900 1125 L1897 1160" fill="none" stroke="#5a2a22" stroke-width="9.0" stroke-linecap="round" stroke-linejoin="round"/><path d="M1893 1110 L1900 1125 L1897 1160" fill="none" stroke="#c0432e" stroke-width="6" stroke-linecap="round" stroke-linejoin="round"/>
<path d="M1969 900 C1968 1050 1968 1250 1972 1401 L2006 1401 L2006 900 Z" fill="#3f78b8" stroke="#2f3e55" stroke-width="2"/>
<path d="M1969 905 C1970 870 1985 848 2003 841 L2040 840 C2047 846 2045 857 2035 864 L2000 910 L1998 960 L1969 960 Z" fill="#3a6fae" stroke="#2f3e55" stroke-width="2"/>
<path d="M2034 849 C2010 852 1992 868 1982 895 C1976 912 1978 925 1986 922 C1992 905 2000 885 2022 864" fill="none" stroke="#a9cdee" stroke-width="4"/>
<path d="M1958.0 898.0 L1962.0 990.0" fill="none" stroke="#6b6030" stroke-width="11.0" stroke-linecap="round" stroke-linejoin="round"/><path d="M1958.0 898.0 L1962.0 990.0" fill="none" stroke="#f7ea2e" stroke-width="8" stroke-linecap="round" stroke-linejoin="round"/>
<path d="M1960.0 1030.0 L1970.0 1218.0" fill="none" stroke="#6b6030" stroke-width="11.0" stroke-linecap="round" stroke-linejoin="round"/><path d="M1960.0 1030.0 L1970.0 1218.0" fill="none" stroke="#f7ea2e" stroke-width="8" stroke-linecap="round" stroke-linejoin="round"/>
<path d="M1956 1000 C1970 995 1985 980 2000 970" fill="none" stroke="#5a2a22" stroke-width="22" stroke-linecap="round" stroke-linejoin="round"/><path d="M1956 1000 C1970 995 1985 980 2000 970" fill="none" stroke="#e4513a" stroke-width="18" stroke-linecap="round" stroke-linejoin="round"/>
<path d="M1966 1292 C1980 1280 1992 1270 2006 1262" fill="none" stroke="#5a2a22" stroke-width="22" stroke-linecap="round" stroke-linejoin="round"/><path d="M1966 1292 C1980 1280 1992 1270 2006 1262" fill="none" stroke="#e4513a" stroke-width="18" stroke-linecap="round" stroke-linejoin="round"/>
<path d="M2070 1064 C2090 1070 2110 1095 2140 1100" fill="none" stroke="#5a2a22" stroke-width="20" stroke-linecap="round" stroke-linejoin="round"/><path d="M2070 1064 C2090 1070 2110 1095 2140 1100" fill="none" stroke="#e4513a" stroke-width="16" stroke-linecap="round" stroke-linejoin="round"/>
<ellipse cx="2142" cy="1100" rx="7" ry="9" fill="#f08a70" stroke="#5a2a22" stroke-width="1.5"/>
<path d="M2070 1110 C2090 1118 2110 1132 2138 1136" fill="none" stroke="#2f3e55" stroke-width="21" stroke-linecap="round" stroke-linejoin="round"/><path d="M2070 1110 C2090 1118 2110 1132 2138 1136" fill="none" stroke="#3f78b8" stroke-width="17" stroke-linecap="round" stroke-linejoin="round"/>
<path d="M1995 905 L1997 1380 C1997 1395 2010 1400 2040 1400 C2070 1400 2080 1392 2080 1380 L2076 880 Z" fill="url(#art)" stroke="#5a2a22" stroke-width="2"/>
<ellipse cx="2036" cy="896" rx="50" ry="33" transform="rotate(-47 2036 896)" fill="#f2a898" stroke="#6a3a30" stroke-width="2"/>
<ellipse cx="2036" cy="896" rx="42" ry="25" transform="rotate(-47 2036 896)" fill="#e4583e"/>
<ellipse cx="2046" cy="887" rx="30" ry="16" transform="rotate(-47 2046 887)" fill="#b8221e"/>
<path d="M1118.0 836.0 L1413.0 1022.0" fill="none" stroke="#111" stroke-width="5" stroke-dasharray="9 9"/><path d="M1400.0 1021.5 L1413.0 1022.0 L1406.9 1010.5" fill="none" stroke="#111" stroke-width="3"/>
<path d="M1252.0 859.0 L1252.0 605.0 L1354.0 605.0" fill="none" stroke="#111" stroke-width="5" stroke-dasharray="9 9"/><path d="M1342.7 611.5 L1354.0 605.0 L1342.7 598.5" fill="none" stroke="#111" stroke-width="3"/>
<path d="M1252.0 859.0 L1359.0 859.0" fill="none" stroke="#111" stroke-width="5" stroke-dasharray="9 9"/><path d="M1347.7 865.5 L1359.0 859.0 L1347.7 852.5" fill="none" stroke="#111" stroke-width="3"/>
<path d="M1740.0 553.0 L1663.0 633.0" fill="none" stroke="#111" stroke-width="5" stroke-dasharray="9 9"/><path d="M1666.1 620.4 L1663.0 633.0 L1675.5 629.4" fill="none" stroke="#111" stroke-width="3"/>
<path d="M1740.0 553.0 L1700.0 729.0" fill="none" stroke="#111" stroke-width="5" stroke-dasharray="9 9"/><path d="M1696.2 716.6 L1700.0 729.0 L1708.8 719.5" fill="none" stroke="#111" stroke-width="3"/>
<path d="M1147.0 1048.0 L1212.0 1085.0" fill="none" stroke="#111" stroke-width="5" stroke-dasharray="9 9"/><path d="M1199.0 1085.1 L1212.0 1085.0 L1205.4 1073.8" fill="none" stroke="#111" stroke-width="3"/>
<path d="M1051.0 1529.0 L1287.0 1326.0" fill="none" stroke="#111" stroke-width="5" stroke-dasharray="9 9"/><path d="M1282.7 1338.3 L1287.0 1326.0 L1274.2 1328.4" fill="none" stroke="#111" stroke-width="3"/>
<path d="M1219.0 1655.0 L1312.0 1532.0" fill="none" stroke="#111" stroke-width="5" stroke-dasharray="9 9"/><path d="M1310.4 1544.9 L1312.0 1532.0 L1300.0 1537.1" fill="none" stroke="#111" stroke-width="3"/>
<path d="M1543.0 1600.0 L1691.0 1492.0" fill="none" stroke="#111" stroke-width="5" stroke-dasharray="9 9"/><path d="M1685.7 1503.9 L1691.0 1492.0 L1678.1 1493.4" fill="none" stroke="#111" stroke-width="3"/>
<path d="M1921.0 1591.0 L1746.0 1476.0" fill="none" stroke="#111" stroke-width="5" stroke-dasharray="9 9"/><path d="M1759.0 1476.8 L1746.0 1476.0 L1751.8 1487.6" fill="none" stroke="#111" stroke-width="3"/>
<path d="M2120.0 1479.0 L1892.0 1413.0" fill="none" stroke="#111" stroke-width="5" stroke-dasharray="9 9"/><path d="M1904.6 1409.9 L1892.0 1413.0 L1901.0 1422.4" fill="none" stroke="#111" stroke-width="3"/>
<path d="M1961.0 791.0 L1953.0 815.0" fill="none" stroke="#111" stroke-width="5" stroke-dasharray="9 9"/><path d="M1950.4 802.3 L1953.0 815.0 L1962.7 806.4" fill="none" stroke="#111" stroke-width="3"/>
<path d="M1059 850 C1058 838 1062 830 1068 820 L1077 810 C1080 825 1083 838 1082 850 L1080 846 M1065 830 L1085 831" fill="none" stroke="#e8606a" stroke-width="2.6" stroke-linecap="round" stroke-linejoin="round"/>
<path d="M1205 691 L1223 691 C1226 692 1226 695 1224.5 697 L1219 706 C1216 708 1213 708 1212 709 L1225 711.5 C1229 713 1231 716 1231 720 L1231.5 724 C1230 727 1227 729 1225 730.5 L1213.5 730.5 C1210 729 1207.5 727 1207.5 724 M1203.5 694 L1203 702 L1208 718 L1207.5 724" fill="none" stroke="#e8606a" stroke-width="2.6" stroke-linecap="round" stroke-linejoin="round"/>
<path d="M1770 534 C1766 532 1762 532 1758 534 C1750 538 1746 546 1745.5 556 C1745 566 1750 578 1758 581 C1764 582 1770 581 1773 578 C1776 575 1777 570 1777 567" fill="none" stroke="#e8606a" stroke-width="2.6" stroke-linecap="round" stroke-linejoin="round"/>
<path d="M1108 1014 L1112 1050 M1108 1014 L1122 1015 C1132 1016 1140 1022 1140 1028 L1140 1040 C1132 1046 1125 1052 1115 1053" fill="none" stroke="#e8606a" stroke-width="2.6" stroke-linecap="round" stroke-linejoin="round"/>
<path d="M1029 1544 C1020 1547 1012 1547 1006 1547 L1006 1583 L1031 1583 M1011 1566 L1033 1567" fill="none" stroke="#e8606a" stroke-width="2.6" stroke-linecap="round" stroke-linejoin="round"/>
<path d="M1238 1676 C1232 1679 1220 1678 1210 1678 L1210 1700 C1210 1704 1212 1708 1213 1709 M1214 1693 L1239 1693" fill="none" stroke="#e8606a" stroke-width="2.6" stroke-linecap="round" stroke-linejoin="round"/>
<path d="M1530 1620 L1518 1621 C1510 1630 1506 1645 1506 1660 L1507 1666 C1515 1670 1525 1671 1530 1669 C1536 1665 1537 1655 1537 1649 M1526 1649 L1549 1648 L1559 1669" fill="none" stroke="#e8606a" stroke-width="2.6" stroke-linecap="round" stroke-linejoin="round"/>
<path d="M1913 1613 L1913 1641 M1913 1628 L1931 1628 M1938 1615 L1938 1660" fill="none" stroke="#e8606a" stroke-width="2.6" stroke-linecap="round" stroke-linejoin="round"/>
<path d="M2150.5 1486 L2151 1504 L2148.5 1520 L2148.5 1530" fill="none" stroke="#e8606a" stroke-width="2.6" stroke-linecap="round" stroke-linejoin="round"/>
</svg>
</div>
<div class="abs" style="left:0;top:1918px;width:3024px;height:1px;background:#000"></div>
<div class="abs" style="left:0;top:1919px;width:3024px;height:45px;background:linear-gradient(#4a4a4a,#3a3a3a)"></div>
<div class="t" style="left:29.0px;top:1929.5px;font-size:25.28px;line-height:25.28px;font-weight:400;color:#e8e8e8;">"Bone Tissue Diagram.docx": 17 characters (an approximate value).</div>
<div class="t" style="left:1900.0px;top:1929.2px;font-size:25.70px;line-height:25.70px;font-weight:400;color:#e8e8e8;">Your file is up to date</div>
<svg class="abs" style="left:2177px;top:1929px" width="32" height="24" viewBox="0 0 32 24"><path d="M2 7 V3 a1 1 0 0 1 1 -1 H8 M24 2 H29 a1 1 0 0 1 1 1 V7 M30 17 V21 a1 1 0 0 1 -1 1 H24 M8 22 H3 a1 1 0 0 1 -1 -1 V17" fill="none" stroke="#e8e8e8" stroke-width="2.2"/><rect x="1.5" y="1.5" width="29" height="21" rx="2" fill="none" stroke="#e8e8e8" stroke-width="1.4"/></svg>
<div class="t" style="left:2225.0px;top:1930.1px;font-size:24.63px;line-height:24.63px;font-weight:400;color:#e8e8e8;">Focus</div>
<div class="abs" style="left:2314px;top:1919px;width:74px;height:45px;background:#555"></div>
<svg class="abs" style="left:2336px;top:1928px" width="30" height="28" viewBox="0 0 30 28"><rect x="2" y="2" width="26" height="24" fill="none" stroke="#f0f0f0" stroke-width="2"/><path d="M6 7 H24" stroke="#f0f0f0" stroke-width="2"/><path d="M6 11 H24" stroke="#f0f0f0" stroke-width="2"/><path d="M6 15 H24" stroke="#f0f0f0" stroke-width="2"/><path d="M6 19 H24" stroke="#f0f0f0" stroke-width="2"/><path d="M6 23 H24" stroke="#f0f0f0" stroke-width="2"/></svg>
<svg class="abs" style="left:2405px;top:1928px" width="38" height="34" viewBox="0 0 38 34"><path d="M18 22 H2 V2 H26 V12" fill="none" stroke="#e8e8e8" stroke-width="2"/><path d="M6 7 H22 M6 11 H22 M6 15 H16" stroke="#e8e8e8" stroke-width="2"/><circle cx="28" cy="24" r="9" fill="#e8e8e8"/><path d="M22 20 C26 22 24 26 28 28 M30 16 C30 20 34 20 36 22" stroke="#3b3b3b" stroke-width="2" fill="none"/></svg>
<svg class="abs" style="left:2478px;top:1929px" width="34" height="26" viewBox="0 0 34 26"><path d="M10 3.0 H32" stroke="#e8e8e8" stroke-width="2"/><path d="M2 3.0 H6" stroke="#e8e8e8" stroke-width="2"/><path d="M18 9.5 H32" stroke="#e8e8e8" stroke-width="2"/><path d="M10 9.5 H14" stroke="#e8e8e8" stroke-width="2"/><path d="M18 16.0 H32" stroke="#e8e8e8" stroke-width="2"/><path d="M10 16.0 H14" stroke="#e8e8e8" stroke-width="2"/><path d="M10 22.5 H32" stroke="#e8e8e8" stroke-width="2"/><path d="M2 22.5 H6" stroke="#e8e8e8" stroke-width="2"/></svg>
<svg class="abs" style="left:2551px;top:1929px" width="32" height="26" viewBox="0 0 32 26"><path d="M2 3.0 H30" stroke="#e8e8e8" stroke-width="2"/><path d="M2 9.5 H24" stroke="#e8e8e8" stroke-width="2"/><path d="M2 16.0 H30" stroke="#e8e8e8" stroke-width="2"/><path d="M2 22.5 H20" stroke="#e8e8e8" stroke-width="2"/></svg>
<div class="abs" style="left:2618px;top:1939px;width:16px;height:4px;background:#f0f0f0"></div>
<div class="abs" style="left:2648px;top:1937px;width:200px;height:8px;border-radius:4px;background:#6e6e6e"></div>
<div class="abs" style="left:2740px;top:1924px;width:33px;height:33px;border-radius:17px;background:#9a9a9a"></div>
<div class="abs" style="left:2862px;top:1939px;width:17px;height:4px;background:#f0f0f0"></div>
<div class="abs" style="left:2868.5px;top:1932.5px;width:4px;height:17px;background:#f0f0f0"></div>
<div class="t" style="left:2912.0px;top:1930.1px;font-size:24.61px;line-height:24.61px;font-weight:400;color:#e8e8e8;">142%</div>
</body></html>
